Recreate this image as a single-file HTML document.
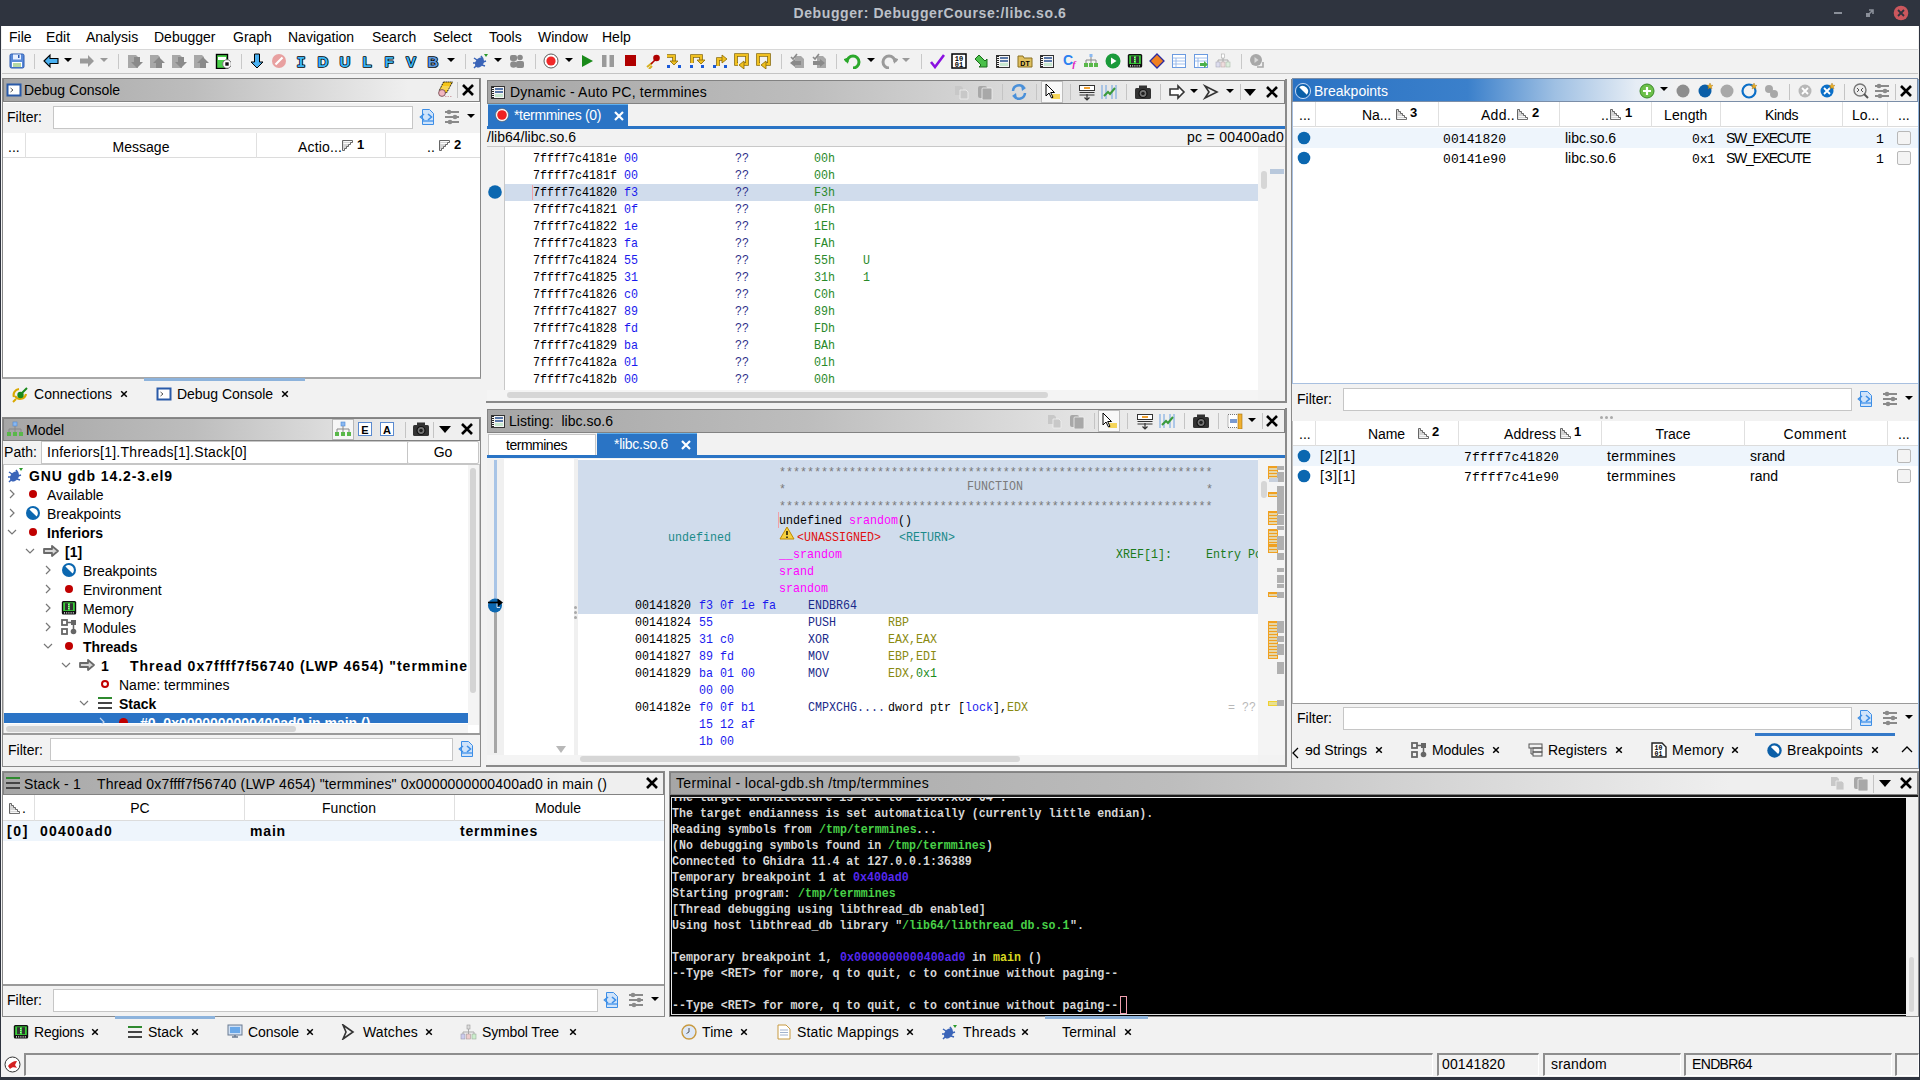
<!DOCTYPE html><html><head><meta charset="utf-8"><style>
html,body{margin:0;padding:0}
body{width:1920px;height:1080px;position:relative;overflow:hidden;background:#f2f2f2;font-family:"Liberation Sans",sans-serif}
div,span,svg{position:absolute;display:block}
span{white-space:pre}
</style></head><body>
<div style="left:0px;top:0px;width:1920px;height:26px;background:#2f343f"></div>
<span style="left:793.50px;top:6.15px;font-size:14px;line-height:14px;color:#bcc0c8;font-family:'Liberation Sans',sans-serif;font-weight:bold;letter-spacing:0.599px;">Debugger: DebuggerCourse:/libc.so.6</span>
<svg style="left:1830px;top:5px;" width="16" height="16" viewBox="0 0 16 16"><rect x="4" y="7" width="8" height="2" fill="#8a8f99"/></svg>
<svg style="left:1862px;top:5px;" width="16" height="16" viewBox="0 0 16 16"><path d="M5 11L11 5M7 5H11V9" stroke="#8a8f99" stroke-width="1.6" fill="none"/><rect x="4" y="8" width="4" height="4" fill="#8a8f99"/></svg>
<svg style="left:1893px;top:5px;" width="16" height="16" viewBox="0 0 16 16"><circle cx="8" cy="8" r="7.3" fill="#cc575d"/><path d="M5 5L11 11M11 5L5 11" stroke="#2f343f" stroke-width="1.8"/></svg>
<div style="left:0px;top:26px;width:1px;height:1054px;background:#2f343f"></div>
<div style="left:1919px;top:26px;width:1px;height:1054px;background:#2f343f"></div>
<div style="left:0px;top:1077px;width:1920px;height:3px;background:#2f343f"></div>
<div style="left:2px;top:26px;width:1916px;height:23px;background:#fff"></div>
<span style="left:9.00px;top:30.15px;font-size:14px;line-height:14px;color:#000;font-family:'Liberation Sans',sans-serif;">File</span>
<span style="left:46.00px;top:30.15px;font-size:14px;line-height:14px;color:#000;font-family:'Liberation Sans',sans-serif;">Edit</span>
<span style="left:86.00px;top:30.15px;font-size:14px;line-height:14px;color:#000;font-family:'Liberation Sans',sans-serif;">Analysis</span>
<span style="left:154.00px;top:30.15px;font-size:14px;line-height:14px;color:#000;font-family:'Liberation Sans',sans-serif;">Debugger</span>
<span style="left:233.00px;top:30.15px;font-size:14px;line-height:14px;color:#000;font-family:'Liberation Sans',sans-serif;">Graph</span>
<span style="left:288.00px;top:30.15px;font-size:14px;line-height:14px;color:#000;font-family:'Liberation Sans',sans-serif;">Navigation</span>
<span style="left:372.00px;top:30.15px;font-size:14px;line-height:14px;color:#000;font-family:'Liberation Sans',sans-serif;">Search</span>
<span style="left:433.00px;top:30.15px;font-size:14px;line-height:14px;color:#000;font-family:'Liberation Sans',sans-serif;">Select</span>
<span style="left:489.00px;top:30.15px;font-size:14px;line-height:14px;color:#000;font-family:'Liberation Sans',sans-serif;">Tools</span>
<span style="left:538.00px;top:30.15px;font-size:14px;line-height:14px;color:#000;font-family:'Liberation Sans',sans-serif;">Window</span>
<span style="left:602.00px;top:30.15px;font-size:14px;line-height:14px;color:#000;font-family:'Liberation Sans',sans-serif;">Help</span>
<div style="left:2px;top:49px;width:1916px;height:25px;background:#f2f2f2;border-top:1px solid #d8d8d8;border-bottom:1px solid #c4c4c4;box-sizing:border-box"></div>
<div style="left:2px;top:78px;width:479px;height:301px;background:#fff;border:1px solid #8a8a8a;border-bottom:2px solid #a8a8a8;box-sizing:border-box"></div>
<div style="left:3px;top:78px;width:477px;height:24px;background:linear-gradient(to right,#a6a6a6 0%,#bdbdbd 40%,#efefef 85%);border:1px solid #828282;box-sizing:border-box"></div>
<svg style="left:6px;top:82px;" width="16" height="16" viewBox="0 0 16 16"><rect x="1.5" y="2.5" width="13" height="11" fill="#fff" stroke="#2a5aa8" stroke-width="2"/><path d="M4.5 6L7 8L4.5 10" stroke="#555" fill="none" stroke-width="1"/></svg>
<span style="left:24.00px;top:83.15px;font-size:14px;line-height:14px;color:#000;font-family:'Liberation Sans',sans-serif;letter-spacing:-0.039px;">Debug Console</span>
<svg style="left:437px;top:81px;" width="18" height="18" viewBox="0 0 18 18"><path d="M6.5 1H15.5L9.5 12L2 10Z" fill="#f5c518" stroke="#111" stroke-width="1" stroke-dasharray="1.3 0.7"/><path d="M5 6H12.5M4 8H11.5" stroke="#fbe89a" stroke-width="0.9"/><circle cx="5" cy="12" r="3.4" fill="#f2b6c0" stroke="#6a4048" stroke-width="0.8"/><path d="M8 15.5H15" stroke="#c89098" stroke-width="0.8" stroke-dasharray="1.5 1"/></svg>
<div style="left:457px;top:82px;width:1px;height:16px;background:#c4c4c4"></div>
<svg style="left:460px;top:81.5px;" width="16" height="16" viewBox="0 0 16 16"><path d="M3.0 3.0L13.0 13.0M13.0 3.0L3.0 13.0" stroke="#000" stroke-width="2.6" stroke-linecap="butt"/></svg>
<div style="left:3px;top:103px;width:477px;height:30px;background:#f2f2f2"></div>
<span style="left:7.00px;top:110.15px;font-size:14px;line-height:14px;color:#000;font-family:'Liberation Sans',sans-serif;">Filter:</span>
<div style="left:53px;top:106px;width:360px;height:23px;background:#fff;border:1px solid #c6c6c6;box-sizing:border-box"></div>
<svg style="left:418px;top:108px;" width="18" height="18" viewBox="0 0 18 18"><path d="M4.5 1.5H11.5L15.5 5.5V16.5H4.5Z" fill="#cfe3fa" stroke="#3d8ee6" stroke-width="1"/><path d="M5 13H15" stroke="#5aa0ee" stroke-width="1.6"/><path d="M6 6L2.5 9L6 12M10 6L13.5 9L10 12" fill="none" stroke="#3d8ee6" stroke-width="1.6"/></svg>
<svg style="left:443px;top:108px;" width="18" height="18" viewBox="0 0 18 18"><g stroke="#8a8a8a" stroke-width="2"><path d="M2 4H16M2 9H16M2 14H16"/></g><g fill="#8a8a8a"><circle cx="6" cy="4" r="2.3"/><circle cx="12" cy="9" r="2.3"/><circle cx="7" cy="14" r="2.3"/></g></svg>
<svg style="left:466px;top:113px;" width="10" height="6" viewBox="0 0 10 6"><path d="M1 1L9 1L5 5Z" fill="#000"/></svg>
<div style="left:3px;top:133px;width:477px;height:25px;background:#fff;border-bottom:1px solid #dcdcdc;box-sizing:border-box"></div>
<div style="left:25px;top:133px;width:1px;height:25px;background:#e0e0e0"></div>
<div style="left:256px;top:133px;width:1px;height:25px;background:#e0e0e0"></div>
<div style="left:385px;top:133px;width:1px;height:25px;background:#e0e0e0"></div>
<span style="left:8.00px;top:140.15px;font-size:14px;line-height:14px;color:#000;font-family:'Liberation Sans',sans-serif;">...</span>
<span style="left:112.50px;top:140.15px;font-size:14px;line-height:14px;color:#000;font-family:'Liberation Sans',sans-serif;letter-spacing:0.027px;">Message</span>
<span style="left:298.00px;top:140.15px;font-size:14px;line-height:14px;color:#000;font-family:'Liberation Sans',sans-serif;letter-spacing:0.151px;">Actio...</span>
<svg style="left:340px;top:138px;" width="15" height="15" viewBox="0 0 15 15"><g transform="translate(1,1)"><path d="M1.5 1.5H11.5V3.5H9.5V5.5H7.5V7.5H5.5V9.5H3.5V11.5H1.5Z" fill="#d4d4d4" stroke="#666" stroke-width="1" stroke-linejoin="round"/><path d="M2.5 2.5H11M2.5 4.5H9M2.5 10.5H3" stroke="#fff" stroke-width="0.9"/></g></svg>
<span style="left:357.00px;top:137.99px;font-size:13px;line-height:13px;color:#000;font-family:'Liberation Sans',sans-serif;font-weight:bold;">1</span>
<span style="left:427.00px;top:140.15px;font-size:14px;line-height:14px;color:#000;font-family:'Liberation Sans',sans-serif;">..</span>
<svg style="left:437px;top:138px;" width="15" height="15" viewBox="0 0 15 15"><g transform="translate(1,1)"><path d="M1.5 1.5H11.5V3.5H9.5V5.5H7.5V7.5H5.5V9.5H3.5V11.5H1.5Z" fill="#d4d4d4" stroke="#666" stroke-width="1" stroke-linejoin="round"/><path d="M2.5 2.5H11M2.5 4.5H9M2.5 10.5H3" stroke="#fff" stroke-width="0.9"/></g></svg>
<span style="left:454.00px;top:137.99px;font-size:13px;line-height:13px;color:#000;font-family:'Liberation Sans',sans-serif;font-weight:bold;">2</span>
<div style="left:2px;top:379px;width:479px;height:37px;background:#f2f2f2"></div>
<div style="left:144px;top:378px;width:161px;height:3px;background:#8db3dc"></div>
<svg style="left:12px;top:386px;" width="17" height="17" viewBox="0 0 17 17"><path d="M3 10A6 6 0 0 0 14 8" stroke="#d9a800" stroke-width="2.2" fill="none"/><path d="M2 11A6 6 0 0 1 7 3" stroke="#d9a800" stroke-width="2.2" fill="none"/><circle cx="8.5" cy="9" r="3.2" fill="#1a8a1a"/><path d="M9 8L15 2" stroke="#1a8a1a" stroke-width="2"/><path d="M1 16L4 13" stroke="#d9a800" stroke-width="2"/></svg>
<span style="left:34.00px;top:387.15px;font-size:14px;line-height:14px;color:#000;font-family:'Liberation Sans',sans-serif;letter-spacing:0.016px;">Connections</span>
<svg style="left:119px;top:389px;" width="10" height="10" viewBox="0 0 10 10"><path d="M2.2 2.2L7.8 7.8M7.8 2.2L2.2 7.8" stroke="#000" stroke-width="1.5"/></svg>
<svg style="left:156px;top:386px;" width="16" height="16" viewBox="0 0 16 16"><rect x="1.5" y="2.5" width="13" height="11" fill="#fff" stroke="#2a5aa8" stroke-width="2"/><path d="M4.5 6L7 8L4.5 10" stroke="#555" fill="none" stroke-width="1"/></svg>
<span style="left:177.00px;top:387.15px;font-size:14px;line-height:14px;color:#000;font-family:'Liberation Sans',sans-serif;letter-spacing:-0.039px;">Debug Console</span>
<svg style="left:280px;top:389px;" width="10" height="10" viewBox="0 0 10 10"><path d="M2.2 2.2L7.8 7.8M7.8 2.2L2.2 7.8" stroke="#000" stroke-width="1.5"/></svg>
<div style="left:2px;top:417px;width:479px;height:350px;background:#f2f2f2;border:1px solid #8a8a8a;box-sizing:border-box"></div>
<div style="left:3px;top:418px;width:477px;height:23px;background:linear-gradient(to right,#a6a6a6 0%,#bdbdbd 40%,#efefef 85%);border:1px solid #828282;box-sizing:border-box"></div>
<svg style="left:6px;top:421px;" width="18" height="17" viewBox="0 0 18 17"><rect x="7" y="1" width="4" height="4" fill="#8ab8f0" stroke="#4a88d8" stroke-width="0.6"/><path d="M9 5V8M3 8H15M3 8V11M9 8V11M15 8V11" stroke="#888" stroke-width="1"/><rect x="1" y="11" width="4" height="4" fill="#5ab84a"/><rect x="7" y="11" width="4" height="4" fill="#5ab84a"/><rect x="13" y="11" width="4" height="4" fill="#5ab84a"/></svg>
<span style="left:26.00px;top:423.15px;font-size:14px;line-height:14px;color:#000;font-family:'Liberation Sans',sans-serif;letter-spacing:-0.027px;">Model</span>
<div style="left:332px;top:419px;width:22px;height:21px;background:#f6f6f6;border:1px solid #b8b8b8;box-sizing:border-box"></div>
<svg style="left:334px;top:421px;" width="18" height="17" viewBox="0 0 18 17"><rect x="7" y="1" width="4" height="4" fill="#8ab8f0" stroke="#4a88d8" stroke-width="0.6"/><path d="M9 5V8M3 8H15M3 8V11M9 8V11M15 8V11" stroke="#888" stroke-width="1"/><rect x="1" y="11" width="4" height="4" fill="#5ab84a"/><rect x="7" y="11" width="4" height="4" fill="#5ab84a"/><rect x="13" y="11" width="4" height="4" fill="#5ab84a"/></svg>
<svg style="left:357px;top:421px;" width="16" height="16" viewBox="0 0 16 16"><rect x="1.5" y="1.5" width="13" height="13" fill="#fff" stroke="#5a8ad0"/><text x="8" y="12.5" font-size="11" font-weight="bold" text-anchor="middle" font-family="Liberation Sans" fill="#000">E</text></svg>
<svg style="left:379px;top:421px;" width="16" height="16" viewBox="0 0 16 16"><rect x="1.5" y="1.5" width="13" height="13" fill="#fff" stroke="#5a8ad0"/><text x="8" y="12.5" font-size="11" font-weight="bold" text-anchor="middle" font-family="Liberation Sans" fill="#000">A</text></svg>
<div style="left:405px;top:422px;width:1px;height:16px;background:#c4c4c4"></div>
<svg style="left:412px;top:420px;" width="18" height="18" viewBox="0 0 18 18"><rect x="1" y="5" width="16" height="11" rx="1.5" fill="#333"/><rect x="5" y="2.5" width="8" height="3.5" fill="#333"/><circle cx="9" cy="10.5" r="4" fill="#777" stroke="#111" stroke-width="1.2"/><circle cx="9" cy="10.5" r="1.8" fill="#222"/></svg>
<div style="left:433px;top:422px;width:1px;height:16px;background:#c4c4c4"></div>
<svg style="left:438px;top:424px;" width="14" height="10" viewBox="0 0 14 10"><path d="M1 2L13 2L7 9Z" fill="#000"/></svg>
<svg style="left:459px;top:421px;" width="16" height="16" viewBox="0 0 16 16"><path d="M3.0 3.0L13.0 13.0M13.0 3.0L3.0 13.0" stroke="#000" stroke-width="2.6" stroke-linecap="butt"/></svg>
<span style="left:4.00px;top:445.15px;font-size:14px;line-height:14px;color:#000;font-family:'Liberation Sans',sans-serif;letter-spacing:0.062px;">Path:</span>
<div style="left:41px;top:441px;width:367px;height:23px;background:#fff;border:1px solid #c6c6c6;box-sizing:border-box"></div>
<span style="left:47.00px;top:445.15px;font-size:14px;line-height:14px;color:#000;font-family:'Liberation Sans',sans-serif;letter-spacing:0.268px;">Inferiors[1].Threads[1].Stack[0]</span>
<div style="left:407px;top:441px;width:72px;height:23px;background:#fff;border:1px solid #c6c6c6;border-radius:2px;box-sizing:border-box"></div>
<span style="left:433.66px;top:445.15px;font-size:14px;line-height:14px;color:#000;font-family:'Liberation Sans',sans-serif;">Go</span>
<div style="left:3px;top:464px;width:477px;height:270px;background:#fff;border:1px solid #c6c6c6;box-sizing:border-box"></div>
<svg style="left:7px;top:467px;" width="17" height="17" viewBox="0 0 17 17"><ellipse cx="7.5" cy="9.5" rx="4" ry="5.5" fill="#3a64b8" transform="rotate(35 7.5 9.5)"/><path d="M2 5L5 7M1 10H4M2 15L5 12M9 3L11 6M14 8L11 9M13 13L10 12" stroke="#3a64b8" stroke-width="1.5"/><path d="M12 1L16 1L14 4Z" fill="#2a9a2a"/></svg>
<span style="left:29.00px;top:469.15px;font-size:14px;line-height:14px;color:#000;font-family:'Liberation Sans',sans-serif;font-weight:bold;letter-spacing:0.911px;">GNU gdb 14.2-3.el9</span>
<svg style="left:7px;top:488px;" width="10" height="12" viewBox="0 0 10 12"><path d="M3 2L7 6L3 10" fill="none" stroke="#777" stroke-width="1.2"/></svg>
<svg style="left:27px;top:488px;" width="12" height="12" viewBox="0 0 12 12"><circle cx="6" cy="6" r="4" fill="#c00000"/></svg>
<span style="left:47.00px;top:488.15px;font-size:14px;line-height:14px;color:#000;font-family:'Liberation Sans',sans-serif;">Available</span>
<svg style="left:7px;top:507px;" width="10" height="12" viewBox="0 0 10 12"><path d="M3 2L7 6L3 10" fill="none" stroke="#777" stroke-width="1.2"/></svg>
<svg style="left:25px;top:505px;" width="16" height="16" viewBox="0 0 16 16"><circle cx="8" cy="8" r="7" fill="#0b67b0"/><path d="M4.4 4.4A5.1 5.1 0 0 1 11.6 11.6Z" fill="#fff"/></svg>
<span style="left:47.00px;top:507.15px;font-size:14px;line-height:14px;color:#000;font-family:'Liberation Sans',sans-serif;">Breakpoints</span>
<svg style="left:6px;top:527px;" width="12" height="10" viewBox="0 0 12 10"><path d="M2 3L6 7L10 3" fill="none" stroke="#777" stroke-width="1.2"/></svg>
<svg style="left:27px;top:526px;" width="12" height="12" viewBox="0 0 12 12"><circle cx="6" cy="6" r="4" fill="#c00000"/></svg>
<span style="left:47.00px;top:526.15px;font-size:14px;line-height:14px;color:#000;font-family:'Liberation Sans',sans-serif;font-weight:bold;">Inferiors</span>
<svg style="left:24px;top:546px;" width="12" height="10" viewBox="0 0 12 10"><path d="M2 3L6 7L10 3" fill="none" stroke="#777" stroke-width="1.2"/></svg>
<svg style="left:42px;top:544px;" width="18" height="14" viewBox="0 0 18 14"><path d="M2 5H10V2L16 7L10 12V9H2Z" fill="#d8d8d8" stroke="#6a6a6a" stroke-width="1.8" stroke-linejoin="round"/></svg>
<span style="left:65.00px;top:545.15px;font-size:14px;line-height:14px;color:#000;font-family:'Liberation Sans',sans-serif;font-weight:bold;">[1]</span>
<svg style="left:43px;top:564px;" width="10" height="12" viewBox="0 0 10 12"><path d="M3 2L7 6L3 10" fill="none" stroke="#777" stroke-width="1.2"/></svg>
<svg style="left:61px;top:562px;" width="16" height="16" viewBox="0 0 16 16"><circle cx="8" cy="8" r="7" fill="#0b67b0"/><path d="M4.4 4.4A5.1 5.1 0 0 1 11.6 11.6Z" fill="#fff"/></svg>
<span style="left:83.00px;top:564.15px;font-size:14px;line-height:14px;color:#000;font-family:'Liberation Sans',sans-serif;">Breakpoints</span>
<svg style="left:43px;top:583px;" width="10" height="12" viewBox="0 0 10 12"><path d="M3 2L7 6L3 10" fill="none" stroke="#777" stroke-width="1.2"/></svg>
<svg style="left:63px;top:583px;" width="12" height="12" viewBox="0 0 12 12"><circle cx="6" cy="6" r="4" fill="#c00000"/></svg>
<span style="left:83.00px;top:583.15px;font-size:14px;line-height:14px;color:#000;font-family:'Liberation Sans',sans-serif;">Environment</span>
<svg style="left:43px;top:602px;" width="10" height="12" viewBox="0 0 10 12"><path d="M3 2L7 6L3 10" fill="none" stroke="#777" stroke-width="1.2"/></svg>
<svg style="left:61px;top:600px;" width="16" height="16" viewBox="0 0 16 16"><rect x="0.8" y="1" width="14.4" height="13.5" rx="1.5" fill="#111"/><rect x="2.2" y="2.4" width="11.6" height="8.6" fill="#3ad03a"/><rect x="4" y="3.2" width="3" height="7" fill="#333"/><rect x="9" y="3.2" width="3" height="7" fill="#333"/><path d="M7.8 4V10" stroke="#fff" stroke-width="0.8" stroke-dasharray="1 1"/><path d="M3 12.8H13" stroke="#fff" stroke-width="1.2" stroke-dasharray="1 1.2"/></svg>
<span style="left:83.00px;top:602.15px;font-size:14px;line-height:14px;color:#000;font-family:'Liberation Sans',sans-serif;">Memory</span>
<svg style="left:43px;top:621px;" width="10" height="12" viewBox="0 0 10 12"><path d="M3 2L7 6L3 10" fill="none" stroke="#777" stroke-width="1.2"/></svg>
<svg style="left:61px;top:619px;" width="16" height="16" viewBox="0 0 16 16"><rect x="1" y="1" width="5" height="5" fill="none" stroke="#666" stroke-width="1.8"/><rect x="10" y="1" width="5" height="5" fill="#666"/><rect x="1" y="10" width="5" height="5" fill="none" stroke="#666" stroke-width="1.8"/><circle cx="12.5" cy="12.5" r="2.8" fill="#666"/><path d="M6 3.5H10M12.5 6V10" stroke="#666" stroke-width="1.5"/></svg>
<span style="left:83.00px;top:621.15px;font-size:14px;line-height:14px;color:#000;font-family:'Liberation Sans',sans-serif;">Modules</span>
<svg style="left:42px;top:641px;" width="12" height="10" viewBox="0 0 12 10"><path d="M2 3L6 7L10 3" fill="none" stroke="#777" stroke-width="1.2"/></svg>
<svg style="left:63px;top:640px;" width="12" height="12" viewBox="0 0 12 12"><circle cx="6" cy="6" r="4" fill="#c00000"/></svg>
<span style="left:83.00px;top:640.15px;font-size:14px;line-height:14px;color:#000;font-family:'Liberation Sans',sans-serif;font-weight:bold;">Threads</span>
<svg style="left:60px;top:660px;" width="12" height="10" viewBox="0 0 12 10"><path d="M2 3L6 7L10 3" fill="none" stroke="#777" stroke-width="1.2"/></svg>
<svg style="left:78px;top:658px;" width="18" height="14" viewBox="0 0 18 14"><path d="M2 5H10V2L16 7L10 12V9H2Z" fill="#d8d8d8" stroke="#6a6a6a" stroke-width="1.8" stroke-linejoin="round"/></svg>
<span style="left:101.00px;top:659.15px;font-size:14px;line-height:14px;color:#000;font-family:'Liberation Sans',sans-serif;font-weight:bold;">1</span>
<svg style="left:100px;top:679px;" width="10" height="10" viewBox="0 0 10 10"><circle cx="5" cy="5" r="3" fill="none" stroke="#c00000" stroke-width="2"/></svg>
<span style="left:119.00px;top:678.15px;font-size:14px;line-height:14px;color:#000;font-family:'Liberation Sans',sans-serif;">Name: termmines</span>
<svg style="left:78px;top:698px;" width="12" height="10" viewBox="0 0 12 10"><path d="M2 3L6 7L10 3" fill="none" stroke="#777" stroke-width="1.2"/></svg>
<svg style="left:97px;top:695px;" width="16" height="16" viewBox="0 0 16 16"><path d="M1 3H15M1 8H15M1 13H15" stroke="#2f8a2f" stroke-width="2"/><path d="M1 8H15M1 13H15" stroke="#444" stroke-width="2"/></svg>
<span style="left:119.00px;top:697.15px;font-size:14px;line-height:14px;color:#000;font-family:'Liberation Sans',sans-serif;font-weight:bold;">Stack</span>
<span style="left:130.00px;top:659.15px;font-size:14px;line-height:14px;color:#000;font-family:'Liberation Sans',sans-serif;font-weight:bold;letter-spacing:1.004px;">Thread 0x7ffff7f56740 (LWP 4654) &quot;termmine</span>
<div style="left:4px;top:713px;width:464px;height:10px;background:#2b74c6;overflow:hidden"></div>
<div style="left:4px;top:713px;width:464px;height:10px;overflow:hidden"><span style="left:136px;top:3px;font-size:14px;line-height:14px;color:#fff;font-weight:bold;font-family:'Liberation Sans'">#0  0x0000000000400ad0 in main ()</span></div>
<div style="left:4px;top:713px;width:464px;height:10px;overflow:hidden"><div style="left:115px;top:5px;width:9px;height:9px;background:#c00000;border-radius:50%"></div></div>
<svg style="left:97px;top:716px;" width="10" height="12" viewBox="0 0 10 12"><path d="M3 2L7 6L3 10" fill="none" stroke="#c8d8f0" stroke-width="1.2"/></svg>
<div style="left:468px;top:465px;width:11px;height:260px;background:#f4f4f4"></div>
<div style="left:470px;top:468px;width:6px;height:225px;background:#d4d4d4;border-radius:3px"></div>
<div style="left:4px;top:724px;width:464px;height:9px;background:#f4f4f4"></div>
<div style="left:6px;top:726px;width:290px;height:6px;background:#d4d4d4;border-radius:3px"></div>
<div style="left:3px;top:733px;width:477px;height:2px;background:#9a9a9a"></div>
<span style="left:8.00px;top:743.15px;font-size:14px;line-height:14px;color:#000;font-family:'Liberation Sans',sans-serif;">Filter:</span>
<div style="left:50px;top:738px;width:403px;height:23px;background:#fff;border:1px solid #c6c6c6;box-sizing:border-box"></div>
<svg style="left:457px;top:740px;" width="18" height="18" viewBox="0 0 18 18"><path d="M4.5 1.5H11.5L15.5 5.5V16.5H4.5Z" fill="#cfe3fa" stroke="#3d8ee6" stroke-width="1"/><path d="M5 13H15" stroke="#5aa0ee" stroke-width="1.6"/><path d="M6 6L2.5 9L6 12M10 6L13.5 9L10 12" fill="none" stroke="#3d8ee6" stroke-width="1.6"/></svg>
<div style="left:2px;top:771px;width:663px;height:246px;background:#f2f2f2;border:1px solid #8a8a8a;box-sizing:border-box"></div>
<div style="left:3px;top:772px;width:661px;height:23px;background:linear-gradient(to right,#a6a6a6 0%,#bdbdbd 40%,#efefef 85%);border:1px solid #828282;box-sizing:border-box"></div>
<svg style="left:5px;top:775px;" width="16" height="16" viewBox="0 0 16 16"><path d="M1 3H15M1 8H15M1 13H15" stroke="#2f8a2f" stroke-width="2"/><path d="M1 8H15M1 13H15" stroke="#444" stroke-width="2"/></svg>
<span style="left:24.00px;top:777.15px;font-size:14px;line-height:14px;color:#000;font-family:'Liberation Sans',sans-serif;letter-spacing:0.195px;">Stack - 1</span>
<span style="left:97.00px;top:777.15px;font-size:14px;line-height:14px;color:#000;font-family:'Liberation Sans',sans-serif;letter-spacing:0.159px;">Thread 0x7ffff7f56740 (LWP 4654) &quot;termmines&quot; 0x0000000000400ad0 in main ()</span>
<svg style="left:644px;top:775px;" width="16" height="16" viewBox="0 0 16 16"><path d="M3.0 3.0L13.0 13.0M13.0 3.0L3.0 13.0" stroke="#000" stroke-width="2.6" stroke-linecap="butt"/></svg>
<div style="left:3px;top:795px;width:661px;height:190px;background:#fff"></div>
<div style="left:3px;top:795px;width:661px;height:26px;background:#fff;border-bottom:1px solid #dcdcdc;box-sizing:border-box"></div>
<div style="left:34px;top:795px;width:1px;height:26px;background:#e0e0e0"></div>
<div style="left:244px;top:795px;width:1px;height:26px;background:#e0e0e0"></div>
<div style="left:454px;top:795px;width:1px;height:26px;background:#e0e0e0"></div>
<svg style="left:7px;top:800px;" width="15" height="15" viewBox="0 0 15 15"><g transform="translate(1,2)"><path d="M1.5 1.5H3.5V3.5H5.5V5.5H7.5V7.5H9.5V9.5H11.5V11.5H1.5Z" fill="#d4d4d4" stroke="#666" stroke-width="1" stroke-linejoin="round"/><path d="M2.5 2.8H3M2.5 8.6H9M2.5 10.6H11" stroke="#fff" stroke-width="0.9"/></g></svg>
<span style="left:22.00px;top:801.15px;font-size:14px;line-height:14px;color:#000;font-family:'Liberation Sans',sans-serif;">.</span>
<span style="left:130.28px;top:801.15px;font-size:14px;line-height:14px;color:#000;font-family:'Liberation Sans',sans-serif;">PC</span>
<span style="left:322.00px;top:801.15px;font-size:14px;line-height:14px;color:#000;font-family:'Liberation Sans',sans-serif;letter-spacing:0.038px;">Function</span>
<span style="left:535.00px;top:801.15px;font-size:14px;line-height:14px;color:#000;font-family:'Liberation Sans',sans-serif;letter-spacing:0.014px;">Module</span>
<div style="left:3px;top:821px;width:661px;height:20px;background:#eef5fc"></div>
<span style="left:7.00px;top:824.15px;font-size:14px;line-height:14px;color:#000;font-family:'Liberation Sans',sans-serif;font-weight:bold;letter-spacing:1.629px;">[0]</span>
<span style="left:40.00px;top:824.15px;font-size:14px;line-height:14px;color:#000;font-family:'Liberation Sans',sans-serif;font-weight:bold;letter-spacing:1.243px;">00400ad0</span>
<span style="left:250.00px;top:824.15px;font-size:14px;line-height:14px;color:#000;font-family:'Liberation Sans',sans-serif;font-weight:bold;letter-spacing:0.831px;">main</span>
<span style="left:460.00px;top:824.15px;font-size:14px;line-height:14px;color:#000;font-family:'Liberation Sans',sans-serif;font-weight:bold;letter-spacing:0.799px;">termmines</span>
<div style="left:3px;top:984px;width:661px;height:2px;background:#9a9a9a"></div>
<span style="left:7.00px;top:993.15px;font-size:14px;line-height:14px;color:#000;font-family:'Liberation Sans',sans-serif;">Filter:</span>
<div style="left:53px;top:989px;width:545px;height:23px;background:#fff;border:1px solid #c6c6c6;box-sizing:border-box"></div>
<svg style="left:602px;top:991px;" width="18" height="18" viewBox="0 0 18 18"><path d="M4.5 1.5H11.5L15.5 5.5V16.5H4.5Z" fill="#cfe3fa" stroke="#3d8ee6" stroke-width="1"/><path d="M5 13H15" stroke="#5aa0ee" stroke-width="1.6"/><path d="M6 6L2.5 9L6 12M10 6L13.5 9L10 12" fill="none" stroke="#3d8ee6" stroke-width="1.6"/></svg>
<svg style="left:627px;top:991px;" width="18" height="18" viewBox="0 0 18 18"><g stroke="#8a8a8a" stroke-width="2"><path d="M2 4H16M2 9H16M2 14H16"/></g><g fill="#8a8a8a"><circle cx="6" cy="4" r="2.3"/><circle cx="12" cy="9" r="2.3"/><circle cx="7" cy="14" r="2.3"/></g></svg>
<svg style="left:650px;top:996px;" width="10" height="6" viewBox="0 0 10 6"><path d="M1 1L9 1L5 5Z" fill="#000"/></svg>
<div style="left:115px;top:1016px;width:100px;height:3px;background:#8db3dc"></div>
<svg style="left:13px;top:1024px;" width="16" height="16" viewBox="0 0 16 16"><rect x="0.8" y="1" width="14.4" height="13.5" rx="1.5" fill="#111"/><rect x="2.2" y="2.4" width="11.6" height="8.6" fill="#3ad03a"/><rect x="4" y="3.2" width="3" height="7" fill="#333"/><rect x="9" y="3.2" width="3" height="7" fill="#333"/><path d="M7.8 4V10" stroke="#fff" stroke-width="0.8" stroke-dasharray="1 1"/><path d="M3 12.8H13" stroke="#fff" stroke-width="1.2" stroke-dasharray="1 1.2"/></svg>
<span style="left:34.00px;top:1025.15px;font-size:14px;line-height:14px;color:#000;font-family:'Liberation Sans',sans-serif;letter-spacing:-0.195px;">Regions</span>
<svg style="left:90px;top:1027px;" width="10" height="10" viewBox="0 0 10 10"><path d="M2.2 2.2L7.8 7.8M7.8 2.2L2.2 7.8" stroke="#000" stroke-width="1.5"/></svg>
<svg style="left:127px;top:1024px;" width="16" height="16" viewBox="0 0 16 16"><path d="M1 3H15M1 8H15M1 13H15" stroke="#2f8a2f" stroke-width="2"/><path d="M1 8H15M1 13H15" stroke="#444" stroke-width="2"/></svg>
<span style="left:148.00px;top:1025.15px;font-size:14px;line-height:14px;color:#000;font-family:'Liberation Sans',sans-serif;letter-spacing:-0.003px;">Stack</span>
<svg style="left:190px;top:1027px;" width="10" height="10" viewBox="0 0 10 10"><path d="M2.2 2.2L7.8 7.8M7.8 2.2L2.2 7.8" stroke="#000" stroke-width="1.5"/></svg>
<svg style="left:227px;top:1024px;" width="16" height="16" viewBox="0 0 16 16"><rect x="1" y="1" width="14" height="10" fill="#cfe0f5" stroke="#6a7a90"/><rect x="3" y="3" width="10" height="6" fill="#6aa8e8"/><path d="M5 13H11M8 11V13" stroke="#6a7a90" stroke-width="1.5"/></svg>
<span style="left:248.00px;top:1025.15px;font-size:14px;line-height:14px;color:#000;font-family:'Liberation Sans',sans-serif;letter-spacing:-0.052px;">Console</span>
<svg style="left:305px;top:1027px;" width="10" height="10" viewBox="0 0 10 10"><path d="M2.2 2.2L7.8 7.8M7.8 2.2L2.2 7.8" stroke="#000" stroke-width="1.5"/></svg>
<svg style="left:340px;top:1024px;" width="16" height="16" viewBox="0 0 16 16"><path d="M3 1L13 8L3 15L6 8Z" fill="none" stroke="#333" stroke-width="1.6"/></svg>
<span style="left:363.00px;top:1025.15px;font-size:14px;line-height:14px;color:#000;font-family:'Liberation Sans',sans-serif;letter-spacing:0.151px;">Watches</span>
<svg style="left:424px;top:1027px;" width="10" height="10" viewBox="0 0 10 10"><path d="M2.2 2.2L7.8 7.8M7.8 2.2L2.2 7.8" stroke="#000" stroke-width="1.5"/></svg>
<svg style="left:460px;top:1024px;" width="17" height="16" viewBox="0 0 17 16"><rect x="7" y="1" width="3" height="4" fill="#ddd" stroke="#999" stroke-width="0.6"/><path d="M8.5 5V8M3 8H14M3 8V10M8.5 8V10M14 8V10" stroke="#aaa" stroke-width="1"/><rect x="1" y="10" width="4" height="5" fill="#cce" stroke="#99a" stroke-width="0.6"/><rect x="6.5" y="10" width="4" height="5" fill="#ecc" stroke="#a99" stroke-width="0.6"/><rect x="12" y="10" width="4" height="5" fill="#cec" stroke="#9a9" stroke-width="0.6"/></svg>
<span style="left:482.00px;top:1025.15px;font-size:14px;line-height:14px;color:#000;font-family:'Liberation Sans',sans-serif;letter-spacing:-0.144px;">Symbol Tree</span>
<svg style="left:568px;top:1027px;" width="10" height="10" viewBox="0 0 10 10"><path d="M2.2 2.2L7.8 7.8M7.8 2.2L2.2 7.8" stroke="#000" stroke-width="1.5"/></svg>
<svg style="left:4px;top:1056px;" width="17" height="17" viewBox="0 0 17 17"><circle cx="8.5" cy="8.5" r="7.5" fill="#fff" stroke="#333" stroke-width="1"/><path d="M4 10C6 7 9 5 13 5L11 9L13 12C10 11 8 11 6 13Z" fill="#d42020"/></svg>
<div style="left:24px;top:1053px;width:1409px;height:23px;border-top:2px solid #8e8e8e;border-left:2px solid #8e8e8e;border-bottom:1px solid #fff;border-right:1px solid #fff;box-sizing:border-box"></div>
<div style="left:1437px;top:1053px;width:102px;height:23px;border-top:2px solid #8e8e8e;border-left:2px solid #8e8e8e;border-bottom:1px solid #fff;border-right:1px solid #fff;box-sizing:border-box"></div>
<span style="left:1442.00px;top:1057.15px;font-size:14px;line-height:14px;color:#000;font-family:'Liberation Sans',sans-serif;letter-spacing:0.089px;">00141820</span>
<div style="left:1543px;top:1053px;width:138px;height:23px;border-top:2px solid #8e8e8e;border-left:2px solid #8e8e8e;border-bottom:1px solid #fff;border-right:1px solid #fff;box-sizing:border-box"></div>
<span style="left:1551.00px;top:1057.15px;font-size:14px;line-height:14px;color:#000;font-family:'Liberation Sans',sans-serif;letter-spacing:0.218px;">srandom</span>
<div style="left:1684px;top:1053px;width:208px;height:23px;border-top:2px solid #8e8e8e;border-left:2px solid #8e8e8e;border-bottom:1px solid #fff;border-right:1px solid #fff;box-sizing:border-box"></div>
<span style="left:1692.00px;top:1057.15px;font-size:14px;line-height:14px;color:#000;font-family:'Liberation Sans',sans-serif;letter-spacing:-0.655px;">ENDBR64</span>
<div style="left:1895px;top:1053px;width:24px;height:23px;border-top:2px solid #8e8e8e;border-left:2px solid #8e8e8e;border-bottom:1px solid #fff;border-right:1px solid #fff;box-sizing:border-box"></div>
<div style="left:486px;top:79px;width:801px;height:324px;background:#f2f2f2;border-bottom:2px solid #8a8a8a;box-sizing:border-box"></div>
<div style="left:487px;top:80px;width:798px;height:24px;background:linear-gradient(to right,#a6a6a6 0%,#bdbdbd 40%,#efefef 85%);border:1px solid #828282;box-sizing:border-box"></div>
<svg style="left:491px;top:86px;" width="14" height="13" viewBox="0 0 14 13"><rect x="0.5" y="0.5" width="13" height="12" fill="#f4f4f4" stroke="#333" stroke-width="1"/><path d="M2 1V12" stroke="#222" stroke-dasharray="1 1" stroke-width="2"/><rect x="4" y="2" width="8" height="2" fill="#5a78a8"/><rect x="4" y="5" width="8" height="2" fill="#5a78a8"/><rect x="4" y="8" width="8" height="3" fill="#c8e8d0"/></svg>
<span style="left:510.00px;top:85.15px;font-size:14px;line-height:14px;color:#000;font-family:'Liberation Sans',sans-serif;letter-spacing:0.200px;">Dynamic - Auto PC, termmines</span>
<svg style="left:954px;top:84px;" width="16" height="16" viewBox="0 0 16 16"><path d="M1 2H7L9 4V11H1Z" fill="#c8c8c8"/><path d="M6 6H12L14 8V15H6Z" fill="#c8c8c8" stroke="#f0f0f0" stroke-width="0.8"/></svg>
<svg style="left:977px;top:84px;" width="16" height="16" viewBox="0 0 16 16"><rect x="1" y="2" width="9" height="12" rx="2" fill="#a8a8a8"/><rect x="5" y="4" width="10" height="12" rx="1" fill="#a8a8a8" stroke="#f0f0f0" stroke-width="0.8"/></svg>
<div style="left:1002px;top:84px;width:1px;height:16px;background:#c4c4c4"></div>
<svg style="left:1010px;top:83px;" width="18" height="18" viewBox="0 0 18 18"><path d="M3 8A6 6 0 0 1 14 5" fill="none" stroke="#4a90d9" stroke-width="2.5"/><path d="M15 10A6 6 0 0 1 4 13" fill="none" stroke="#4a90d9" stroke-width="2.5"/><path d="M11 2L16 5L12 8Z" fill="#4a90d9"/><path d="M7 16L2 13L6 10Z" fill="#4a90d9"/></svg>
<div style="left:1036px;top:84px;width:1px;height:16px;background:#c4c4c4"></div>
<svg style="left:1041px;top:81px;" width="22" height="22" viewBox="0 0 22 22"><rect x="0.5" y="0.5" width="21" height="21" fill="#f8f8f8" stroke="#bdbdbd"/><rect x="11" y="13" width="8" height="5" fill="#f5d55a"/><path d="M5 3V15L8 12L10.5 17L12 16.3L9.7 11.5H13.5Z" fill="#fff" stroke="#000" stroke-width="1"/></svg>
<div style="left:1070px;top:84px;width:1px;height:16px;background:#c4c4c4"></div>
<svg style="left:1078px;top:83px;" width="18" height="18" viewBox="0 0 18 18"><rect x="1.5" y="2.5" width="15" height="5" fill="#fff" stroke="#333"/><rect x="6" y="4" width="6" height="2" fill="#f0a030"/><path d="M1.5 9.5H16.5M1.5 12H16.5" stroke="#333"/><path d="M9 11V17M6.5 14.5L9 17L11.5 14.5" stroke="#333" fill="none" stroke-width="1.2"/></svg>
<svg style="left:1100px;top:83px;" width="18" height="18" viewBox="0 0 18 18"><path d="M2 2V16M6 2V16M12 2V16M16 2V16" stroke="#6aa0e0" stroke-width="1"/><path d="M4 13L8 9L10 11L15 5" fill="none" stroke="#3a9a3a" stroke-width="2"/></svg>
<div style="left:1126px;top:84px;width:1px;height:16px;background:#c4c4c4"></div>
<svg style="left:1134px;top:83px;" width="18" height="18" viewBox="0 0 18 18"><rect x="1" y="5" width="16" height="11" rx="1.5" fill="#333"/><rect x="5" y="2.5" width="8" height="3.5" fill="#333"/><circle cx="9" cy="10.5" r="4" fill="#777" stroke="#111" stroke-width="1.2"/><circle cx="9" cy="10.5" r="1.8" fill="#222"/></svg>
<div style="left:1160px;top:84px;width:1px;height:16px;background:#c4c4c4"></div>
<svg style="left:1168px;top:84px;" width="18" height="16" viewBox="0 0 18 16"><path d="M2 5H10V2L16 8L10 14V11H2Z" fill="#fff" stroke="#333" stroke-width="1.6"/></svg>
<svg style="left:1189px;top:88px;" width="10" height="6" viewBox="0 0 10 6"><path d="M1 1L9 1L5 5Z" fill="#000"/></svg>
<svg style="left:1202px;top:84px;" width="18" height="16" viewBox="0 0 18 16"><path d="M3 2L15 8L3 14L7 8Z" fill="none" stroke="#333" stroke-width="1.6"/></svg>
<svg style="left:1225px;top:88px;" width="10" height="6" viewBox="0 0 10 6"><path d="M1 1L9 1L5 5Z" fill="#000"/></svg>
<div style="left:1240px;top:84px;width:1px;height:16px;background:#c4c4c4"></div>
<svg style="left:1243px;top:87px;" width="14" height="10" viewBox="0 0 14 10"><path d="M1 2L13 2L7 9Z" fill="#000"/></svg>
<svg style="left:1264px;top:84px;" width="16" height="16" viewBox="0 0 16 16"><path d="M3.0 3.0L13.0 13.0M13.0 3.0L3.0 13.0" stroke="#000" stroke-width="2.6" stroke-linecap="butt"/></svg>
<div style="left:1285px;top:79px;width:2px;height:324px;background:#8a8a8a"></div>
<div style="left:487px;top:104px;width:798px;height:25px;background:#f2f2f2"></div>
<div style="left:488px;top:104px;width:140px;height:22px;background:#2a74c5;border-top:1px solid #5fb0f0;box-sizing:border-box"></div>
<svg style="left:494px;top:107px;" width="16" height="16" viewBox="0 0 16 16"><circle cx="8" cy="8" r="6.5" fill="#fff" stroke="#555" stroke-width="0.6"/><circle cx="8" cy="8" r="4.8" fill="#f02020"/></svg>
<span style="left:514.00px;top:108.15px;font-size:14px;line-height:14px;color:#fff;font-family:'Liberation Sans',sans-serif;letter-spacing:-0.343px;">*termmines (0)</span>
<svg style="left:611px;top:108px;" width="16" height="16" viewBox="0 0 16 16"><path d="M4.0 4.0L12.0 12.0M12.0 4.0L4.0 12.0" stroke="#fff" stroke-width="2.2" stroke-linecap="butt"/></svg>
<div style="left:487px;top:126px;width:798px;height:3px;background:#2a74c5"></div>
<span style="left:487.00px;top:130.15px;font-size:14px;line-height:14px;color:#000;font-family:'Liberation Sans',sans-serif;letter-spacing:0.018px;">/lib64/libc.so.6</span>
<span style="left:1187.00px;top:130.15px;font-size:14px;line-height:14px;color:#000;font-family:'Liberation Sans',sans-serif;letter-spacing:0.305px;">pc = 00400ad0</span>
<div style="left:487px;top:146px;width:798px;height:1px;background:#c8c8c8"></div>
<div style="left:504px;top:147px;width:754px;height:243px;background:#fff;border-left:1px solid #c8c8c8;box-sizing:border-box"></div>
<div style="left:1258px;top:147px;width:27px;height:243px;background:#f4f4f4"></div>
<div style="left:1261px;top:171px;width:6px;height:18px;background:#d6d6d6;border-radius:3px"></div>
<div style="left:1270px;top:169px;width:14px;height:5px;background:#b8c8dc"></div>
<div style="left:505px;top:184px;width:753px;height:17px;background:#d0dcec"></div>
<div style="left:532px;top:185px;width:1px;height:15px;background:#f0a0a8"></div>
<svg style="left:487px;top:184px;" width="16" height="16" viewBox="0 0 16 16"><circle cx="8" cy="8" r="6.8" fill="#0b67b0"/></svg>
<span style="left:533.00px;top:153.45px;font-size:12.2px;line-height:12.2px;color:#000;font-family:'Liberation Mono',monospace;transform:scaleX(0.9562);transform-origin:0 0;">7ffff7c4181e</span>
<span style="left:624.00px;top:153.45px;font-size:12.2px;line-height:12.2px;color:#1a1aee;font-family:'Liberation Mono',monospace;transform:scaleX(0.9562);transform-origin:0 0;">00</span>
<span style="left:735.00px;top:153.45px;font-size:12.2px;line-height:12.2px;color:#2e2e8a;font-family:'Liberation Mono',monospace;transform:scaleX(0.9562);transform-origin:0 0;">??</span>
<span style="left:814.00px;top:153.45px;font-size:12.2px;line-height:12.2px;color:#2a8a2a;font-family:'Liberation Mono',monospace;transform:scaleX(0.9562);transform-origin:0 0;">00h</span>
<span style="left:533.00px;top:170.45px;font-size:12.2px;line-height:12.2px;color:#000;font-family:'Liberation Mono',monospace;transform:scaleX(0.9562);transform-origin:0 0;">7ffff7c4181f</span>
<span style="left:624.00px;top:170.45px;font-size:12.2px;line-height:12.2px;color:#1a1aee;font-family:'Liberation Mono',monospace;transform:scaleX(0.9562);transform-origin:0 0;">00</span>
<span style="left:735.00px;top:170.45px;font-size:12.2px;line-height:12.2px;color:#2e2e8a;font-family:'Liberation Mono',monospace;transform:scaleX(0.9562);transform-origin:0 0;">??</span>
<span style="left:814.00px;top:170.45px;font-size:12.2px;line-height:12.2px;color:#2a8a2a;font-family:'Liberation Mono',monospace;transform:scaleX(0.9562);transform-origin:0 0;">00h</span>
<span style="left:533.00px;top:187.45px;font-size:12.2px;line-height:12.2px;color:#000;font-family:'Liberation Mono',monospace;transform:scaleX(0.9562);transform-origin:0 0;">7ffff7c41820</span>
<span style="left:624.00px;top:187.45px;font-size:12.2px;line-height:12.2px;color:#1a1aee;font-family:'Liberation Mono',monospace;transform:scaleX(0.9562);transform-origin:0 0;">f3</span>
<span style="left:735.00px;top:187.45px;font-size:12.2px;line-height:12.2px;color:#2e2e8a;font-family:'Liberation Mono',monospace;transform:scaleX(0.9562);transform-origin:0 0;">??</span>
<span style="left:814.00px;top:187.45px;font-size:12.2px;line-height:12.2px;color:#2a8a2a;font-family:'Liberation Mono',monospace;transform:scaleX(0.9562);transform-origin:0 0;">F3h</span>
<span style="left:533.00px;top:204.45px;font-size:12.2px;line-height:12.2px;color:#000;font-family:'Liberation Mono',monospace;transform:scaleX(0.9562);transform-origin:0 0;">7ffff7c41821</span>
<span style="left:624.00px;top:204.45px;font-size:12.2px;line-height:12.2px;color:#1a1aee;font-family:'Liberation Mono',monospace;transform:scaleX(0.9562);transform-origin:0 0;">0f</span>
<span style="left:735.00px;top:204.45px;font-size:12.2px;line-height:12.2px;color:#2e2e8a;font-family:'Liberation Mono',monospace;transform:scaleX(0.9562);transform-origin:0 0;">??</span>
<span style="left:814.00px;top:204.45px;font-size:12.2px;line-height:12.2px;color:#2a8a2a;font-family:'Liberation Mono',monospace;transform:scaleX(0.9562);transform-origin:0 0;">0Fh</span>
<span style="left:533.00px;top:221.45px;font-size:12.2px;line-height:12.2px;color:#000;font-family:'Liberation Mono',monospace;transform:scaleX(0.9562);transform-origin:0 0;">7ffff7c41822</span>
<span style="left:624.00px;top:221.45px;font-size:12.2px;line-height:12.2px;color:#1a1aee;font-family:'Liberation Mono',monospace;transform:scaleX(0.9562);transform-origin:0 0;">1e</span>
<span style="left:735.00px;top:221.45px;font-size:12.2px;line-height:12.2px;color:#2e2e8a;font-family:'Liberation Mono',monospace;transform:scaleX(0.9562);transform-origin:0 0;">??</span>
<span style="left:814.00px;top:221.45px;font-size:12.2px;line-height:12.2px;color:#2a8a2a;font-family:'Liberation Mono',monospace;transform:scaleX(0.9562);transform-origin:0 0;">1Eh</span>
<span style="left:533.00px;top:238.45px;font-size:12.2px;line-height:12.2px;color:#000;font-family:'Liberation Mono',monospace;transform:scaleX(0.9562);transform-origin:0 0;">7ffff7c41823</span>
<span style="left:624.00px;top:238.45px;font-size:12.2px;line-height:12.2px;color:#1a1aee;font-family:'Liberation Mono',monospace;transform:scaleX(0.9562);transform-origin:0 0;">fa</span>
<span style="left:735.00px;top:238.45px;font-size:12.2px;line-height:12.2px;color:#2e2e8a;font-family:'Liberation Mono',monospace;transform:scaleX(0.9562);transform-origin:0 0;">??</span>
<span style="left:814.00px;top:238.45px;font-size:12.2px;line-height:12.2px;color:#2a8a2a;font-family:'Liberation Mono',monospace;transform:scaleX(0.9562);transform-origin:0 0;">FAh</span>
<span style="left:533.00px;top:255.45px;font-size:12.2px;line-height:12.2px;color:#000;font-family:'Liberation Mono',monospace;transform:scaleX(0.9562);transform-origin:0 0;">7ffff7c41824</span>
<span style="left:624.00px;top:255.45px;font-size:12.2px;line-height:12.2px;color:#1a1aee;font-family:'Liberation Mono',monospace;transform:scaleX(0.9562);transform-origin:0 0;">55</span>
<span style="left:735.00px;top:255.45px;font-size:12.2px;line-height:12.2px;color:#2e2e8a;font-family:'Liberation Mono',monospace;transform:scaleX(0.9562);transform-origin:0 0;">??</span>
<span style="left:814.00px;top:255.45px;font-size:12.2px;line-height:12.2px;color:#2a8a2a;font-family:'Liberation Mono',monospace;transform:scaleX(0.9562);transform-origin:0 0;">55h</span>
<span style="left:863.00px;top:255.45px;font-size:12.2px;line-height:12.2px;color:#2a8a2a;font-family:'Liberation Mono',monospace;transform:scaleX(0.9562);transform-origin:0 0;">U</span>
<span style="left:533.00px;top:272.45px;font-size:12.2px;line-height:12.2px;color:#000;font-family:'Liberation Mono',monospace;transform:scaleX(0.9562);transform-origin:0 0;">7ffff7c41825</span>
<span style="left:624.00px;top:272.45px;font-size:12.2px;line-height:12.2px;color:#1a1aee;font-family:'Liberation Mono',monospace;transform:scaleX(0.9562);transform-origin:0 0;">31</span>
<span style="left:735.00px;top:272.45px;font-size:12.2px;line-height:12.2px;color:#2e2e8a;font-family:'Liberation Mono',monospace;transform:scaleX(0.9562);transform-origin:0 0;">??</span>
<span style="left:814.00px;top:272.45px;font-size:12.2px;line-height:12.2px;color:#2a8a2a;font-family:'Liberation Mono',monospace;transform:scaleX(0.9562);transform-origin:0 0;">31h</span>
<span style="left:863.00px;top:272.45px;font-size:12.2px;line-height:12.2px;color:#2a8a2a;font-family:'Liberation Mono',monospace;transform:scaleX(0.9562);transform-origin:0 0;">1</span>
<span style="left:533.00px;top:289.45px;font-size:12.2px;line-height:12.2px;color:#000;font-family:'Liberation Mono',monospace;transform:scaleX(0.9562);transform-origin:0 0;">7ffff7c41826</span>
<span style="left:624.00px;top:289.45px;font-size:12.2px;line-height:12.2px;color:#1a1aee;font-family:'Liberation Mono',monospace;transform:scaleX(0.9562);transform-origin:0 0;">c0</span>
<span style="left:735.00px;top:289.45px;font-size:12.2px;line-height:12.2px;color:#2e2e8a;font-family:'Liberation Mono',monospace;transform:scaleX(0.9562);transform-origin:0 0;">??</span>
<span style="left:814.00px;top:289.45px;font-size:12.2px;line-height:12.2px;color:#2a8a2a;font-family:'Liberation Mono',monospace;transform:scaleX(0.9562);transform-origin:0 0;">C0h</span>
<span style="left:533.00px;top:306.45px;font-size:12.2px;line-height:12.2px;color:#000;font-family:'Liberation Mono',monospace;transform:scaleX(0.9562);transform-origin:0 0;">7ffff7c41827</span>
<span style="left:624.00px;top:306.45px;font-size:12.2px;line-height:12.2px;color:#1a1aee;font-family:'Liberation Mono',monospace;transform:scaleX(0.9562);transform-origin:0 0;">89</span>
<span style="left:735.00px;top:306.45px;font-size:12.2px;line-height:12.2px;color:#2e2e8a;font-family:'Liberation Mono',monospace;transform:scaleX(0.9562);transform-origin:0 0;">??</span>
<span style="left:814.00px;top:306.45px;font-size:12.2px;line-height:12.2px;color:#2a8a2a;font-family:'Liberation Mono',monospace;transform:scaleX(0.9562);transform-origin:0 0;">89h</span>
<span style="left:533.00px;top:323.45px;font-size:12.2px;line-height:12.2px;color:#000;font-family:'Liberation Mono',monospace;transform:scaleX(0.9562);transform-origin:0 0;">7ffff7c41828</span>
<span style="left:624.00px;top:323.45px;font-size:12.2px;line-height:12.2px;color:#1a1aee;font-family:'Liberation Mono',monospace;transform:scaleX(0.9562);transform-origin:0 0;">fd</span>
<span style="left:735.00px;top:323.45px;font-size:12.2px;line-height:12.2px;color:#2e2e8a;font-family:'Liberation Mono',monospace;transform:scaleX(0.9562);transform-origin:0 0;">??</span>
<span style="left:814.00px;top:323.45px;font-size:12.2px;line-height:12.2px;color:#2a8a2a;font-family:'Liberation Mono',monospace;transform:scaleX(0.9562);transform-origin:0 0;">FDh</span>
<span style="left:533.00px;top:340.45px;font-size:12.2px;line-height:12.2px;color:#000;font-family:'Liberation Mono',monospace;transform:scaleX(0.9562);transform-origin:0 0;">7ffff7c41829</span>
<span style="left:624.00px;top:340.45px;font-size:12.2px;line-height:12.2px;color:#1a1aee;font-family:'Liberation Mono',monospace;transform:scaleX(0.9562);transform-origin:0 0;">ba</span>
<span style="left:735.00px;top:340.45px;font-size:12.2px;line-height:12.2px;color:#2e2e8a;font-family:'Liberation Mono',monospace;transform:scaleX(0.9562);transform-origin:0 0;">??</span>
<span style="left:814.00px;top:340.45px;font-size:12.2px;line-height:12.2px;color:#2a8a2a;font-family:'Liberation Mono',monospace;transform:scaleX(0.9562);transform-origin:0 0;">BAh</span>
<span style="left:533.00px;top:357.45px;font-size:12.2px;line-height:12.2px;color:#000;font-family:'Liberation Mono',monospace;transform:scaleX(0.9562);transform-origin:0 0;">7ffff7c4182a</span>
<span style="left:624.00px;top:357.45px;font-size:12.2px;line-height:12.2px;color:#1a1aee;font-family:'Liberation Mono',monospace;transform:scaleX(0.9562);transform-origin:0 0;">01</span>
<span style="left:735.00px;top:357.45px;font-size:12.2px;line-height:12.2px;color:#2e2e8a;font-family:'Liberation Mono',monospace;transform:scaleX(0.9562);transform-origin:0 0;">??</span>
<span style="left:814.00px;top:357.45px;font-size:12.2px;line-height:12.2px;color:#2a8a2a;font-family:'Liberation Mono',monospace;transform:scaleX(0.9562);transform-origin:0 0;">01h</span>
<span style="left:533.00px;top:374.45px;font-size:12.2px;line-height:12.2px;color:#000;font-family:'Liberation Mono',monospace;transform:scaleX(0.9562);transform-origin:0 0;">7ffff7c4182b</span>
<span style="left:624.00px;top:374.45px;font-size:12.2px;line-height:12.2px;color:#1a1aee;font-family:'Liberation Mono',monospace;transform:scaleX(0.9562);transform-origin:0 0;">00</span>
<span style="left:735.00px;top:374.45px;font-size:12.2px;line-height:12.2px;color:#2e2e8a;font-family:'Liberation Mono',monospace;transform:scaleX(0.9562);transform-origin:0 0;">??</span>
<span style="left:814.00px;top:374.45px;font-size:12.2px;line-height:12.2px;color:#2a8a2a;font-family:'Liberation Mono',monospace;transform:scaleX(0.9562);transform-origin:0 0;">00h</span>
<div style="left:487px;top:390px;width:771px;height:10px;background:#f4f4f4"></div>
<div style="left:507px;top:392px;width:541px;height:6px;background:#d6d6d6;border-radius:3px"></div>
<div style="left:486px;top:408px;width:801px;height:359px;background:#f2f2f2;border-bottom:2px solid #8a8a8a;border-right:2px solid #8a8a8a;box-sizing:border-box"></div>
<div style="left:487px;top:409px;width:798px;height:24px;background:linear-gradient(to right,#a6a6a6 0%,#bdbdbd 40%,#efefef 85%);border:1px solid #828282;box-sizing:border-box"></div>
<svg style="left:491px;top:415px;" width="14" height="13" viewBox="0 0 14 13"><rect x="0.5" y="0.5" width="13" height="12" fill="#f4f4f4" stroke="#333" stroke-width="1"/><path d="M2 1V12" stroke="#222" stroke-dasharray="1 1" stroke-width="2"/><rect x="4" y="2" width="8" height="2" fill="#5a78a8"/><rect x="4" y="5" width="8" height="2" fill="#5a78a8"/><rect x="4" y="8" width="8" height="3" fill="#c8e8d0"/></svg>
<span style="left:509.00px;top:414.15px;font-size:14px;line-height:14px;color:#000;font-family:'Liberation Sans',sans-serif;letter-spacing:0.026px;">Listing:  libc.so.6</span>
<svg style="left:1047px;top:413px;" width="16" height="16" viewBox="0 0 16 16"><path d="M1 2H7L9 4V11H1Z" fill="#c8c8c8"/><path d="M6 6H12L14 8V15H6Z" fill="#c8c8c8" stroke="#f0f0f0" stroke-width="0.8"/></svg>
<svg style="left:1069px;top:413px;" width="16" height="16" viewBox="0 0 16 16"><rect x="1" y="2" width="9" height="12" rx="2" fill="#a8a8a8"/><rect x="5" y="4" width="10" height="12" rx="1" fill="#a8a8a8" stroke="#f0f0f0" stroke-width="0.8"/></svg>
<div style="left:1094px;top:413px;width:1px;height:16px;background:#c4c4c4"></div>
<svg style="left:1098px;top:410px;" width="22" height="22" viewBox="0 0 22 22"><rect x="0.5" y="0.5" width="21" height="21" fill="#f8f8f8" stroke="#bdbdbd"/><rect x="11" y="13" width="8" height="5" fill="#f5d55a"/><path d="M5 3V15L8 12L10.5 17L12 16.3L9.7 11.5H13.5Z" fill="#fff" stroke="#000" stroke-width="1"/></svg>
<div style="left:1127px;top:413px;width:1px;height:16px;background:#c4c4c4"></div>
<svg style="left:1136px;top:412px;" width="18" height="18" viewBox="0 0 18 18"><rect x="1.5" y="2.5" width="15" height="5" fill="#fff" stroke="#333"/><rect x="6" y="4" width="6" height="2" fill="#f0a030"/><path d="M1.5 9.5H16.5M1.5 12H16.5" stroke="#333"/><path d="M9 11V17M6.5 14.5L9 17L11.5 14.5" stroke="#333" fill="none" stroke-width="1.2"/></svg>
<svg style="left:1158px;top:412px;" width="18" height="18" viewBox="0 0 18 18"><path d="M2 2V16M6 2V16M12 2V16M16 2V16" stroke="#6aa0e0" stroke-width="1"/><path d="M4 13L8 9L10 11L15 5" fill="none" stroke="#3a9a3a" stroke-width="2"/></svg>
<div style="left:1184px;top:413px;width:1px;height:16px;background:#c4c4c4"></div>
<svg style="left:1192px;top:412px;" width="18" height="18" viewBox="0 0 18 18"><rect x="1" y="5" width="16" height="11" rx="1.5" fill="#333"/><rect x="5" y="2.5" width="8" height="3.5" fill="#333"/><circle cx="9" cy="10.5" r="4" fill="#777" stroke="#111" stroke-width="1.2"/><circle cx="9" cy="10.5" r="1.8" fill="#222"/></svg>
<div style="left:1218px;top:413px;width:1px;height:16px;background:#c4c4c4"></div>
<svg style="left:1226px;top:413px;" width="18" height="16" viewBox="0 0 18 16"><rect x="2" y="1.5" width="12" height="13" fill="#fff" stroke="#777" stroke-dasharray="1 1"/><rect x="4" y="6" width="7" height="4" fill="#7a9ad0"/><rect x="12" y="1" width="4" height="15" fill="#f0b030" stroke="#a07010" stroke-width="0.6"/></svg>
<svg style="left:1247px;top:417px;" width="10" height="6" viewBox="0 0 10 6"><path d="M1 1L9 1L5 5Z" fill="#000"/></svg>
<div style="left:1262px;top:413px;width:1px;height:16px;background:#c4c4c4"></div>
<svg style="left:1264px;top:413px;" width="16" height="16" viewBox="0 0 16 16"><path d="M3.0 3.0L13.0 13.0M13.0 3.0L3.0 13.0" stroke="#000" stroke-width="2.6" stroke-linecap="butt"/></svg>
<div style="left:487px;top:433px;width:798px;height:26px;background:#f2f2f2"></div>
<div style="left:488px;top:434px;width:108px;height:22px;background:#fff;border:1px solid #c8c8c8;border-bottom:none;box-sizing:border-box"></div>
<span style="left:506.00px;top:438.15px;font-size:14px;line-height:14px;color:#000;font-family:'Liberation Sans',sans-serif;letter-spacing:-0.483px;">termmines</span>
<div style="left:597px;top:433px;width:100px;height:23px;background:#2a74c5;border-top:1px solid #5fb0f0;box-sizing:border-box"></div>
<span style="left:614.00px;top:437.15px;font-size:14px;line-height:14px;color:#fff;font-family:'Liberation Sans',sans-serif;letter-spacing:-0.281px;">*libc.so.6</span>
<svg style="left:678px;top:437px;" width="16" height="16" viewBox="0 0 16 16"><path d="M4.0 4.0L12.0 12.0M12.0 4.0L4.0 12.0" stroke="#fff" stroke-width="2.2" stroke-linecap="butt"/></svg>
<div style="left:487px;top:455px;width:798px;height:3px;background:#2a74c5"></div>
<div style="left:487px;top:459px;width:17px;height:296px;background:#f0f0f0"></div>
<div style="left:494px;top:460px;width:3px;height:143px;background:#a8c4e6"></div>
<div style="left:494px;top:606px;width:3px;height:147px;background:#a6a6a6"></div>
<div style="left:504px;top:459px;width:70px;height:296px;background:#fff"></div>
<div style="left:574px;top:459px;width:4px;height:296px;background:#f0f0f0"></div>
<div style="left:574px;top:606px;width:3px;height:3px;background:#aaa;border-radius:50%"></div>
<div style="left:574px;top:611px;width:3px;height:3px;background:#aaa;border-radius:50%"></div>
<div style="left:574px;top:616px;width:3px;height:3px;background:#aaa;border-radius:50%"></div>
<svg style="left:555px;top:745px;" width="12" height="10" viewBox="0 0 12 10"><path d="M1 1H11L6 8Z" fill="#b8b8b8"/></svg>
<svg style="left:486px;top:596px;" width="18" height="17" viewBox="0 0 18 17"><circle cx="9" cy="9.5" r="7" fill="#0b67b0"/><path d="M2 6.5H15" stroke="#000" stroke-width="1.6"/><path d="M11.5 2.5L17 6.5L11.5 11Z" fill="#000"/><path d="M11 7.5V11.5H14" stroke="#fff" stroke-width="0.8" fill="none"/></svg>
<div style="left:578px;top:459px;width:680px;height:296px;background:#fff"></div>
<div style="left:578px;top:460px;width:680px;height:154px;background:#d0dcec"></div>
<div style="left:1258px;top:459px;width:27px;height:296px;background:#f4f4f4"></div>
<div style="left:1261px;top:481px;width:6px;height:17px;background:#d6d6d6;border-radius:3px"></div>
<div style="left:487px;top:755px;width:771px;height:8px;background:#f4f4f4"></div>
<div style="left:580px;top:756px;width:440px;height:6px;background:#d6d6d6;border-radius:3px"></div>
<div style="left:1268px;top:466px;width:10px;height:13px;background:repeating-linear-gradient(to bottom,#f0a020 0px,#f0a020 1px,#e6d6a8 1px,#e6d6a8 3px);border:1px solid #f0a020;box-sizing:border-box"></div>
<div style="left:1268px;top:492px;width:10px;height:5px;background:repeating-linear-gradient(to bottom,#f0a020 0px,#f0a020 1px,#e6d6a8 1px,#e6d6a8 3px);border:1px solid #f0a020;box-sizing:border-box"></div>
<div style="left:1268px;top:511px;width:10px;height:14px;background:repeating-linear-gradient(to bottom,#f0a020 0px,#f0a020 1px,#e6d6a8 1px,#e6d6a8 3px);border:1px solid #f0a020;box-sizing:border-box"></div>
<div style="left:1268px;top:529px;width:10px;height:16px;background:repeating-linear-gradient(to bottom,#f0a020 0px,#f0a020 1px,#e6d6a8 1px,#e6d6a8 3px);border:1px solid #f0a020;box-sizing:border-box"></div>
<div style="left:1268px;top:545px;width:10px;height:8px;background:repeating-linear-gradient(to bottom,#f0a020 0px,#f0a020 1px,#e6d6a8 1px,#e6d6a8 3px);border:1px solid #f0a020;box-sizing:border-box"></div>
<div style="left:1268px;top:592px;width:10px;height:5px;background:repeating-linear-gradient(to bottom,#f0a020 0px,#f0a020 1px,#e6d6a8 1px,#e6d6a8 3px);border:1px solid #f0a020;box-sizing:border-box"></div>
<div style="left:1268px;top:621px;width:10px;height:38px;background:repeating-linear-gradient(to bottom,#f0a020 0px,#f0a020 1px,#e6d6a8 1px,#e6d6a8 3px);border:1px solid #f0a020;box-sizing:border-box"></div>
<div style="left:1268px;top:701px;width:10px;height:5px;background:#e8e090;border:1px solid #f0d030;box-sizing:border-box"></div>
<div style="left:1277px;top:466px;width:7px;height:4px;background:#b0b0b0"></div>
<div style="left:1277px;top:472px;width:7px;height:10px;background:#b0b0b0"></div>
<div style="left:1277px;top:478px;width:7px;height:3px;background:#b0b0b0"></div>
<div style="left:1277px;top:486px;width:7px;height:12px;background:#b0b0b0"></div>
<div style="left:1277px;top:498px;width:7px;height:16px;background:#b0b0b0"></div>
<div style="left:1277px;top:515px;width:7px;height:10px;background:#b0b0b0"></div>
<div style="left:1277px;top:526px;width:7px;height:4px;background:#b0b0b0"></div>
<div style="left:1277px;top:536px;width:7px;height:14px;background:#b0b0b0"></div>
<div style="left:1277px;top:553px;width:7px;height:7px;background:#b0b0b0"></div>
<div style="left:1277px;top:568px;width:7px;height:4px;background:#b0b0b0"></div>
<div style="left:1277px;top:575px;width:7px;height:8px;background:#b0b0b0"></div>
<div style="left:1277px;top:584px;width:7px;height:4px;background:#b0b0b0"></div>
<div style="left:1277px;top:592px;width:7px;height:6px;background:#b0b0b0"></div>
<div style="left:1277px;top:621px;width:7px;height:12px;background:#b0b0b0"></div>
<div style="left:1277px;top:636px;width:7px;height:6px;background:#b0b0b0"></div>
<div style="left:1277px;top:644px;width:7px;height:11px;background:#b0b0b0"></div>
<div style="left:1277px;top:662px;width:7px;height:12px;background:#b0b0b0"></div>
<div style="left:1277px;top:700px;width:7px;height:6px;background:#b0b0b0"></div>
<div style="left:1269px;top:478px;width:9px;height:4px;background:#c8d0dc"></div>
<span style="left:779.00px;top:466.95px;font-size:12.2px;line-height:12.2px;color:#7a7a7a;font-family:'Liberation Mono',monospace;transform:scaleX(0.9562);transform-origin:0 0;">**************************************************************</span>
<span style="left:779.00px;top:483.95px;font-size:12.2px;line-height:12.2px;color:#7a7a7a;font-family:'Liberation Mono',monospace;transform:scaleX(0.9562);transform-origin:0 0;">*</span>
<span style="left:967.00px;top:481.45px;font-size:12.2px;line-height:12.2px;color:#7a7a7a;font-family:'Liberation Mono',monospace;transform:scaleX(0.9562);transform-origin:0 0;">FUNCTION</span>
<span style="left:1206.00px;top:483.95px;font-size:12.2px;line-height:12.2px;color:#7a7a7a;font-family:'Liberation Mono',monospace;transform:scaleX(0.9562);transform-origin:0 0;">*</span>
<span style="left:779.00px;top:500.95px;font-size:12.2px;line-height:12.2px;color:#7a7a7a;font-family:'Liberation Mono',monospace;transform:scaleX(0.9562);transform-origin:0 0;">**************************************************************</span>
<div style="left:778px;top:512px;width:1px;height:16px;background:#f0a0a8"></div>
<span style="left:779.00px;top:515.45px;font-size:12.2px;line-height:12.2px;color:#000;font-family:'Liberation Mono',monospace;transform:scaleX(0.9562);transform-origin:0 0;">undefined</span>
<span style="left:849.00px;top:515.45px;font-size:12.2px;line-height:12.2px;color:#ff00ff;font-family:'Liberation Mono',monospace;transform:scaleX(0.9562);transform-origin:0 0;">srandom</span>
<span style="left:898.00px;top:515.45px;font-size:12.2px;line-height:12.2px;color:#000;font-family:'Liberation Mono',monospace;transform:scaleX(0.9562);transform-origin:0 0;">()</span>
<span style="left:668.00px;top:532.45px;font-size:12.2px;line-height:12.2px;color:#1a8a8a;font-family:'Liberation Mono',monospace;transform:scaleX(0.9562);transform-origin:0 0;">undefined</span>
<svg style="left:779px;top:526px;" width="16" height="14" viewBox="0 0 16 14"><path d="M8 1L15 13H1Z" fill="#f5d040" stroke="#c08a00" stroke-width="1"/><path d="M8 5V9M8 10.5V12" stroke="#000" stroke-width="1.4"/></svg>
<span style="left:797.00px;top:532.45px;font-size:12.2px;line-height:12.2px;color:#e01010;font-family:'Liberation Mono',monospace;transform:scaleX(0.9562);transform-origin:0 0;">&lt;UNASSIGNED&gt;</span>
<span style="left:899.00px;top:532.45px;font-size:12.2px;line-height:12.2px;color:#1a8a8a;font-family:'Liberation Mono',monospace;transform:scaleX(0.9562);transform-origin:0 0;">&lt;RETURN&gt;</span>
<span style="left:779.00px;top:549.45px;font-size:12.2px;line-height:12.2px;color:#ff00ff;font-family:'Liberation Mono',monospace;transform:scaleX(0.9562);transform-origin:0 0;">__srandom</span>
<span style="left:1116.00px;top:549.45px;font-size:12.2px;line-height:12.2px;color:#1a7a1a;font-family:'Liberation Mono',monospace;transform:scaleX(0.9562);transform-origin:0 0;">XREF[1]:</span>
<span style="left:1206.00px;top:549.45px;font-size:12.2px;line-height:12.2px;color:#1a7a1a;font-family:'Liberation Mono',monospace;transform:scaleX(0.9562);transform-origin:0 0;">Entry Po</span>
<span style="left:779.00px;top:566.45px;font-size:12.2px;line-height:12.2px;color:#ff00ff;font-family:'Liberation Mono',monospace;transform:scaleX(0.9562);transform-origin:0 0;">srand</span>
<span style="left:779.00px;top:583.45px;font-size:12.2px;line-height:12.2px;color:#ff00ff;font-family:'Liberation Mono',monospace;transform:scaleX(0.9562);transform-origin:0 0;">srandom</span>
<span style="left:635.00px;top:600.45px;font-size:12.2px;line-height:12.2px;color:#000;font-family:'Liberation Mono',monospace;transform:scaleX(0.9562);transform-origin:0 0;">00141820</span>
<span style="left:699.00px;top:600.45px;font-size:12.2px;line-height:12.2px;color:#1a1aee;font-family:'Liberation Mono',monospace;transform:scaleX(0.9562);transform-origin:0 0;">f3 0f 1e fa</span>
<span style="left:808.00px;top:600.45px;font-size:12.2px;line-height:12.2px;color:#1a2a8a;font-family:'Liberation Mono',monospace;transform:scaleX(0.9562);transform-origin:0 0;">ENDBR64</span>
<span style="left:635.00px;top:617.45px;font-size:12.2px;line-height:12.2px;color:#000;font-family:'Liberation Mono',monospace;transform:scaleX(0.9562);transform-origin:0 0;">00141824</span>
<span style="left:699.00px;top:617.45px;font-size:12.2px;line-height:12.2px;color:#1a1aee;font-family:'Liberation Mono',monospace;transform:scaleX(0.9562);transform-origin:0 0;">55</span>
<span style="left:808.00px;top:617.45px;font-size:12.2px;line-height:12.2px;color:#1a2a8a;font-family:'Liberation Mono',monospace;transform:scaleX(0.9562);transform-origin:0 0;">PUSH</span>
<span style="left:888.00px;top:617.45px;font-size:12.2px;line-height:12.2px;color:#8a8a10;font-family:'Liberation Mono',monospace;transform:scaleX(0.9562);transform-origin:0 0;">RBP</span>
<span style="left:635.00px;top:634.45px;font-size:12.2px;line-height:12.2px;color:#000;font-family:'Liberation Mono',monospace;transform:scaleX(0.9562);transform-origin:0 0;">00141825</span>
<span style="left:699.00px;top:634.45px;font-size:12.2px;line-height:12.2px;color:#1a1aee;font-family:'Liberation Mono',monospace;transform:scaleX(0.9562);transform-origin:0 0;">31 c0</span>
<span style="left:808.00px;top:634.45px;font-size:12.2px;line-height:12.2px;color:#1a2a8a;font-family:'Liberation Mono',monospace;transform:scaleX(0.9562);transform-origin:0 0;">XOR</span>
<span style="left:888.00px;top:634.45px;font-size:12.2px;line-height:12.2px;color:#8a8a10;font-family:'Liberation Mono',monospace;transform:scaleX(0.9562);transform-origin:0 0;">EAX,EAX</span>
<span style="left:635.00px;top:651.45px;font-size:12.2px;line-height:12.2px;color:#000;font-family:'Liberation Mono',monospace;transform:scaleX(0.9562);transform-origin:0 0;">00141827</span>
<span style="left:699.00px;top:651.45px;font-size:12.2px;line-height:12.2px;color:#1a1aee;font-family:'Liberation Mono',monospace;transform:scaleX(0.9562);transform-origin:0 0;">89 fd</span>
<span style="left:808.00px;top:651.45px;font-size:12.2px;line-height:12.2px;color:#1a2a8a;font-family:'Liberation Mono',monospace;transform:scaleX(0.9562);transform-origin:0 0;">MOV</span>
<span style="left:888.00px;top:651.45px;font-size:12.2px;line-height:12.2px;color:#8a8a10;font-family:'Liberation Mono',monospace;transform:scaleX(0.9562);transform-origin:0 0;">EBP,EDI</span>
<span style="left:635.00px;top:668.45px;font-size:12.2px;line-height:12.2px;color:#000;font-family:'Liberation Mono',monospace;transform:scaleX(0.9562);transform-origin:0 0;">00141829</span>
<span style="left:699.00px;top:668.45px;font-size:12.2px;line-height:12.2px;color:#1a1aee;font-family:'Liberation Mono',monospace;transform:scaleX(0.9562);transform-origin:0 0;">ba 01 00</span>
<span style="left:808.00px;top:668.45px;font-size:12.2px;line-height:12.2px;color:#1a2a8a;font-family:'Liberation Mono',monospace;transform:scaleX(0.9562);transform-origin:0 0;">MOV</span>
<span style="left:888.00px;top:668.45px;font-size:12.2px;line-height:12.2px;color:#8a8a10;font-family:'Liberation Mono',monospace;transform:scaleX(0.9562);transform-origin:0 0;">EDX,</span>
<span style="left:916.00px;top:668.45px;font-size:12.2px;line-height:12.2px;color:#1a8a1a;font-family:'Liberation Mono',monospace;transform:scaleX(0.9562);transform-origin:0 0;">0x1</span>
<span style="left:699.00px;top:685.45px;font-size:12.2px;line-height:12.2px;color:#1a1aee;font-family:'Liberation Mono',monospace;transform:scaleX(0.9562);transform-origin:0 0;">00 00</span>
<span style="left:635.00px;top:702.45px;font-size:12.2px;line-height:12.2px;color:#000;font-family:'Liberation Mono',monospace;transform:scaleX(0.9562);transform-origin:0 0;">0014182e</span>
<span style="left:699.00px;top:702.45px;font-size:12.2px;line-height:12.2px;color:#1a1aee;font-family:'Liberation Mono',monospace;transform:scaleX(0.9562);transform-origin:0 0;">f0 0f b1</span>
<span style="left:808.00px;top:702.45px;font-size:12.2px;line-height:12.2px;color:#1a2a8a;font-family:'Liberation Mono',monospace;transform:scaleX(0.9562);transform-origin:0 0;">CMPXCHG....</span>
<span style="left:699.00px;top:719.45px;font-size:12.2px;line-height:12.2px;color:#1a1aee;font-family:'Liberation Mono',monospace;transform:scaleX(0.9562);transform-origin:0 0;">15 12 af</span>
<span style="left:699.00px;top:736.45px;font-size:12.2px;line-height:12.2px;color:#1a1aee;font-family:'Liberation Mono',monospace;transform:scaleX(0.9562);transform-origin:0 0;">1b 00</span>
<span style="left:888.00px;top:702.45px;font-size:12.2px;line-height:12.2px;color:#000;font-family:'Liberation Mono',monospace;transform:scaleX(0.9562);transform-origin:0 0;">dword ptr [</span>
<span style="left:965.00px;top:702.45px;font-size:12.2px;line-height:12.2px;color:#1a1aee;font-family:'Liberation Mono',monospace;transform:scaleX(0.9562);transform-origin:0 0;">lock</span>
<span style="left:993.00px;top:702.45px;font-size:12.2px;line-height:12.2px;color:#000;font-family:'Liberation Mono',monospace;transform:scaleX(0.9562);transform-origin:0 0;">],</span>
<span style="left:1007.00px;top:702.45px;font-size:12.2px;line-height:12.2px;color:#8a8a10;font-family:'Liberation Mono',monospace;transform:scaleX(0.9562);transform-origin:0 0;">EDX</span>
<span style="left:1228.00px;top:702.45px;font-size:12.2px;line-height:12.2px;color:#b8b8b8;font-family:'Liberation Mono',monospace;transform:scaleX(0.9562);transform-origin:0 0;">= ??</span>
<div style="left:1258px;top:545px;width:10px;height:18px;background:#f4f4f4"></div>
<div style="left:1291px;top:79px;width:628px;height:690px;background:#f2f2f2;border:1px solid #8a8a8a;border-right-color:#90b4dc;box-sizing:border-box"></div>
<div style="left:1292px;top:78px;width:626px;height:24px;background:linear-gradient(to right,#2a72c3 0%,#3b80cb 28%,#9fc0e3 42%,#e6edf5 55%,#f2f2f2 62%);border:1px solid #7b8ea8;box-sizing:border-box"></div>
<svg style="left:1294px;top:82px;" width="18" height="18" viewBox="0 0 18 18"><circle cx="9" cy="9" r="7.6" fill="none" stroke="#cfe0f5" stroke-width="0.9"/><circle cx="9" cy="9" r="6.6" fill="#0b5fa8"/><path d="M5.2 5.2A5.4 5.4 0 0 1 12.8 12.8 Z" fill="#fff"/></svg>
<span style="left:1314.00px;top:84.15px;font-size:14px;line-height:14px;color:#fff;font-family:'Liberation Sans',sans-serif;letter-spacing:0.006px;">Breakpoints</span>
<svg style="left:1638px;top:82px;" width="18" height="18" viewBox="0 0 18 18"><circle cx="9" cy="9" r="7" fill="#6cc04a" stroke="#3a8a2a" stroke-width="1"/><path d="M9 5V13M5 9H13" stroke="#fff" stroke-width="2.2"/></svg>
<svg style="left:1659px;top:86px;" width="10" height="6" viewBox="0 0 10 6"><path d="M1 1L9 1L5 5Z" fill="#000"/></svg>
<svg style="left:1675px;top:82px;" width="17" height="17" viewBox="0 0 17 17"><circle cx="8" cy="9" r="6.5" fill="#8e8e8e" stroke="#8e8e8e" stroke-width="0"/></svg>
<svg style="left:1697px;top:82px;" width="17" height="17" viewBox="0 0 17 17"><circle cx="8" cy="9" r="6.5" fill="#0b5fa8" stroke="#0b5fa8" stroke-width="0"/><path d="M13 1L13.8 3.2L16 3.4L14.3 4.8L15 7L13 5.7L11 7L11.7 4.8L10 3.4L12.2 3.2Z" fill="#f0b020" stroke="#a07010" stroke-width="0.4"/></svg>
<svg style="left:1719px;top:82px;" width="17" height="17" viewBox="0 0 17 17"><circle cx="8" cy="9" r="6.5" fill="#a8a8a8" stroke="#a8a8a8" stroke-width="0"/></svg>
<svg style="left:1741px;top:82px;" width="17" height="17" viewBox="0 0 17 17"><circle cx="8" cy="9" r="6.5" fill="none" stroke="#0b6fc8" stroke-width="2.2"/><path d="M13 1L13.8 3.2L16 3.4L14.3 4.8L15 7L13 5.7L11 7L11.7 4.8L10 3.4L12.2 3.2Z" fill="#f0b020" stroke="#a07010" stroke-width="0.4"/></svg>
<svg style="left:1763px;top:83px;" width="17" height="17" viewBox="0 0 17 17"><circle cx="6" cy="6" r="4" fill="#a8a8a8"/><circle cx="11" cy="11" r="4" fill="#a8a8a8"/></svg>
<div style="left:1789px;top:84px;width:1px;height:16px;background:#c4c4c4"></div>
<svg style="left:1797px;top:82px;" width="17" height="17" viewBox="0 0 17 17"><circle cx="8" cy="9" r="6.5" fill="#b8b8b8" stroke="#b8b8b8" stroke-width="0"/><path d="M5 6L11 12M11 6L5 12" stroke="#fff" stroke-width="1.8"/></svg>
<svg style="left:1819px;top:82px;" width="17" height="17" viewBox="0 0 17 17"><circle cx="8" cy="9" r="6.5" fill="#0b6fc8" stroke="#0b6fc8" stroke-width="0"/><path d="M5 6L11 12M11 6L5 12" stroke="#fff" stroke-width="1.8"/><path d="M13 1L13.8 3.2L16 3.4L14.3 4.8L15 7L13 5.7L11 7L11.7 4.8L10 3.4L12.2 3.2Z" fill="#f0b020" stroke="#a07010" stroke-width="0.4"/></svg>
<div style="left:1844px;top:84px;width:1px;height:16px;background:#c4c4c4"></div>
<svg style="left:1852px;top:82px;" width="18" height="18" viewBox="0 0 18 18"><circle cx="8" cy="8" r="6" fill="#eee" stroke="#777" stroke-width="1.4"/><path d="M5 6L7 8L5 10M11 6L9 8L11 10" stroke="#555" fill="none" stroke-width="1"/><path d="M12 12L16 16" stroke="#555" stroke-width="2"/></svg>
<svg style="left:1873px;top:82px;" width="18" height="18" viewBox="0 0 18 18"><g stroke="#8a8a8a" stroke-width="2"><path d="M2 4H16M2 9H16M2 14H16"/></g><g fill="#8a8a8a"><circle cx="6" cy="4" r="2.3"/><circle cx="12" cy="9" r="2.3"/><circle cx="7" cy="14" r="2.3"/></g></svg>
<div style="left:1895px;top:84px;width:1px;height:16px;background:#c4c4c4"></div>
<svg style="left:1898px;top:83px;" width="16" height="16" viewBox="0 0 16 16"><path d="M3.0 3.0L13.0 13.0M13.0 3.0L3.0 13.0" stroke="#000" stroke-width="2.6" stroke-linecap="butt"/></svg>
<div style="left:1292px;top:102px;width:626px;height:282px;background:#fff;border-left:1px solid #a8c0e0;border-bottom:1px solid #a8c0e0;box-sizing:border-box"></div>
<div style="left:1293px;top:102px;width:625px;height:25px;background:#fff;border-bottom:1px solid #dcdcdc;box-sizing:border-box"></div>
<div style="left:1315px;top:102px;width:1px;height:25px;background:#e0e0e0"></div>
<div style="left:1438px;top:102px;width:1px;height:25px;background:#e0e0e0"></div>
<div style="left:1559px;top:102px;width:1px;height:25px;background:#e0e0e0"></div>
<div style="left:1651px;top:102px;width:1px;height:25px;background:#e0e0e0"></div>
<div style="left:1720px;top:102px;width:1px;height:25px;background:#e0e0e0"></div>
<div style="left:1842px;top:102px;width:1px;height:25px;background:#e0e0e0"></div>
<div style="left:1887px;top:102px;width:1px;height:25px;background:#e0e0e0"></div>
<span style="left:1299.00px;top:108.15px;font-size:14px;line-height:14px;color:#000;font-family:'Liberation Sans',sans-serif;">...</span>
<span style="left:1362.00px;top:108.15px;font-size:14px;line-height:14px;color:#000;font-family:'Liberation Sans',sans-serif;letter-spacing:-0.113px;">Na...</span>
<svg style="left:1394px;top:106px;" width="15" height="15" viewBox="0 0 15 15"><g transform="translate(1,2)"><path d="M1.5 1.5H3.5V3.5H5.5V5.5H7.5V7.5H9.5V9.5H11.5V11.5H1.5Z" fill="#d4d4d4" stroke="#666" stroke-width="1" stroke-linejoin="round"/><path d="M2.5 2.8H3M2.5 8.6H9M2.5 10.6H11" stroke="#fff" stroke-width="0.9"/></g></svg>
<span style="left:1410.00px;top:105.99px;font-size:13px;line-height:13px;color:#000;font-family:'Liberation Sans',sans-serif;font-weight:bold;">3</span>
<span style="left:1481.00px;top:108.15px;font-size:14px;line-height:14px;color:#000;font-family:'Liberation Sans',sans-serif;letter-spacing:0.262px;">Add..</span>
<svg style="left:1515px;top:106px;" width="15" height="15" viewBox="0 0 15 15"><g transform="translate(1,2)"><path d="M1.5 1.5H3.5V3.5H5.5V5.5H7.5V7.5H9.5V9.5H11.5V11.5H1.5Z" fill="#d4d4d4" stroke="#666" stroke-width="1" stroke-linejoin="round"/><path d="M2.5 2.8H3M2.5 8.6H9M2.5 10.6H11" stroke="#fff" stroke-width="0.9"/></g></svg>
<span style="left:1532.00px;top:105.99px;font-size:13px;line-height:13px;color:#000;font-family:'Liberation Sans',sans-serif;font-weight:bold;">2</span>
<span style="left:1601.00px;top:108.15px;font-size:14px;line-height:14px;color:#000;font-family:'Liberation Sans',sans-serif;">..</span>
<svg style="left:1608px;top:106px;" width="15" height="15" viewBox="0 0 15 15"><g transform="translate(1,2)"><path d="M1.5 1.5H3.5V3.5H5.5V5.5H7.5V7.5H9.5V9.5H11.5V11.5H1.5Z" fill="#d4d4d4" stroke="#666" stroke-width="1" stroke-linejoin="round"/><path d="M2.5 2.8H3M2.5 8.6H9M2.5 10.6H11" stroke="#fff" stroke-width="0.9"/></g></svg>
<span style="left:1625.00px;top:105.99px;font-size:13px;line-height:13px;color:#000;font-family:'Liberation Sans',sans-serif;font-weight:bold;">1</span>
<span style="left:1664.00px;top:108.15px;font-size:14px;line-height:14px;color:#000;font-family:'Liberation Sans',sans-serif;letter-spacing:0.113px;">Length</span>
<span style="left:1765.00px;top:108.15px;font-size:14px;line-height:14px;color:#000;font-family:'Liberation Sans',sans-serif;letter-spacing:-0.404px;">Kinds</span>
<span style="left:1852.00px;top:108.15px;font-size:14px;line-height:14px;color:#000;font-family:'Liberation Sans',sans-serif;letter-spacing:-0.048px;">Lo...</span>
<span style="left:1898.00px;top:108.15px;font-size:14px;line-height:14px;color:#000;font-family:'Liberation Sans',sans-serif;">...</span>
<div style="left:1293px;top:128px;width:625px;height:20px;background:#eef5fc"></div>
<svg style="left:1296px;top:130px;" width="16" height="16" viewBox="0 0 16 16"><circle cx="8" cy="8" r="6.3" fill="#0b67b0"/></svg>
<span style="left:1443.00px;top:133.04px;font-size:13px;line-height:13px;color:#000;font-family:'Liberation Mono',monospace;letter-spacing:0.074px;">00141820</span>
<span style="left:1565.00px;top:131.15px;font-size:14px;line-height:14px;color:#000;font-family:'Liberation Sans',sans-serif;letter-spacing:-0.040px;">libc.so.6</span>
<span style="left:1692.00px;top:133.04px;font-size:13px;line-height:13px;color:#000;font-family:'Liberation Mono',monospace;letter-spacing:-0.134px;">0x1</span>
<span style="left:1726.00px;top:131.15px;font-size:14px;line-height:14px;color:#000;font-family:'Liberation Sans',sans-serif;letter-spacing:-1.247px;">SW_EXECUTE</span>
<span style="left:1876.00px;top:133.04px;font-size:13px;line-height:13px;color:#000;font-family:'Liberation Mono',monospace;">1</span>
<div style="left:1897px;top:131px;width:14px;height:14px;background:#f4f4f4;border:1px solid #b8b8b8;border-radius:2px;box-sizing:border-box"></div>
<svg style="left:1296px;top:150px;" width="16" height="16" viewBox="0 0 16 16"><circle cx="8" cy="8" r="6.3" fill="#0b67b0"/></svg>
<span style="left:1443.00px;top:153.04px;font-size:13px;line-height:13px;color:#000;font-family:'Liberation Mono',monospace;letter-spacing:0.074px;">00141e90</span>
<span style="left:1565.00px;top:151.15px;font-size:14px;line-height:14px;color:#000;font-family:'Liberation Sans',sans-serif;letter-spacing:-0.040px;">libc.so.6</span>
<span style="left:1692.00px;top:153.04px;font-size:13px;line-height:13px;color:#000;font-family:'Liberation Mono',monospace;letter-spacing:-0.134px;">0x1</span>
<span style="left:1726.00px;top:151.15px;font-size:14px;line-height:14px;color:#000;font-family:'Liberation Sans',sans-serif;letter-spacing:-1.247px;">SW_EXECUTE</span>
<span style="left:1876.00px;top:153.04px;font-size:13px;line-height:13px;color:#000;font-family:'Liberation Mono',monospace;">1</span>
<div style="left:1897px;top:151px;width:14px;height:14px;background:#f4f4f4;border:1px solid #b8b8b8;border-radius:2px;box-sizing:border-box"></div>
<span style="left:1297.00px;top:392.15px;font-size:14px;line-height:14px;color:#000;font-family:'Liberation Sans',sans-serif;">Filter:</span>
<div style="left:1343px;top:388px;width:509px;height:23px;background:#fff;border:1px solid #c6c6c6;box-sizing:border-box"></div>
<svg style="left:1856px;top:390px;" width="18" height="18" viewBox="0 0 18 18"><path d="M4.5 1.5H11.5L15.5 5.5V16.5H4.5Z" fill="#cfe3fa" stroke="#3d8ee6" stroke-width="1"/><path d="M5 13H15" stroke="#5aa0ee" stroke-width="1.6"/><path d="M6 6L2.5 9L6 12M10 6L13.5 9L10 12" fill="none" stroke="#3d8ee6" stroke-width="1.6"/></svg>
<svg style="left:1881px;top:390px;" width="18" height="18" viewBox="0 0 18 18"><g stroke="#8a8a8a" stroke-width="2"><path d="M2 4H16M2 9H16M2 14H16"/></g><g fill="#8a8a8a"><circle cx="6" cy="4" r="2.3"/><circle cx="12" cy="9" r="2.3"/><circle cx="7" cy="14" r="2.3"/></g></svg>
<svg style="left:1904px;top:395px;" width="10" height="6" viewBox="0 0 10 6"><path d="M1 1L9 1L5 5Z" fill="#000"/></svg>
<div style="left:1600px;top:416px;width:3px;height:3px;background:#aaa;border-radius:50%"></div>
<div style="left:1605px;top:416px;width:3px;height:3px;background:#aaa;border-radius:50%"></div>
<div style="left:1610px;top:416px;width:3px;height:3px;background:#aaa;border-radius:50%"></div>
<div style="left:1292px;top:421px;width:626px;height:283px;background:#fff;border-left:1px solid #c0c0c0;border-bottom:1px solid #9a9a9a;box-sizing:border-box"></div>
<div style="left:1293px;top:421px;width:625px;height:25px;background:#fff;border-bottom:1px solid #dcdcdc;box-sizing:border-box"></div>
<div style="left:1315px;top:421px;width:1px;height:25px;background:#e0e0e0"></div>
<div style="left:1458px;top:421px;width:1px;height:25px;background:#e0e0e0"></div>
<div style="left:1601px;top:421px;width:1px;height:25px;background:#e0e0e0"></div>
<div style="left:1744px;top:421px;width:1px;height:25px;background:#e0e0e0"></div>
<div style="left:1887px;top:421px;width:1px;height:25px;background:#e0e0e0"></div>
<span style="left:1299.00px;top:427.15px;font-size:14px;line-height:14px;color:#000;font-family:'Liberation Sans',sans-serif;">...</span>
<span style="left:1368.00px;top:427.15px;font-size:14px;line-height:14px;color:#000;font-family:'Liberation Sans',sans-serif;letter-spacing:-0.087px;">Name</span>
<svg style="left:1416px;top:425px;" width="15" height="15" viewBox="0 0 15 15"><g transform="translate(1,2)"><path d="M1.5 1.5H3.5V3.5H5.5V5.5H7.5V7.5H9.5V9.5H11.5V11.5H1.5Z" fill="#d4d4d4" stroke="#666" stroke-width="1" stroke-linejoin="round"/><path d="M2.5 2.8H3M2.5 8.6H9M2.5 10.6H11" stroke="#fff" stroke-width="0.9"/></g></svg>
<span style="left:1432.00px;top:424.99px;font-size:13px;line-height:13px;color:#000;font-family:'Liberation Sans',sans-serif;font-weight:bold;">2</span>
<span style="left:1504.00px;top:427.15px;font-size:14px;line-height:14px;color:#000;font-family:'Liberation Sans',sans-serif;letter-spacing:0.091px;">Address</span>
<svg style="left:1558px;top:425px;" width="15" height="15" viewBox="0 0 15 15"><g transform="translate(1,2)"><path d="M1.5 1.5H3.5V3.5H5.5V5.5H7.5V7.5H9.5V9.5H11.5V11.5H1.5Z" fill="#d4d4d4" stroke="#666" stroke-width="1" stroke-linejoin="round"/><path d="M2.5 2.8H3M2.5 8.6H9M2.5 10.6H11" stroke="#fff" stroke-width="0.9"/></g></svg>
<span style="left:1574.00px;top:424.99px;font-size:13px;line-height:13px;color:#000;font-family:'Liberation Sans',sans-serif;font-weight:bold;">1</span>
<span style="left:1655.50px;top:427.15px;font-size:14px;line-height:14px;color:#000;font-family:'Liberation Sans',sans-serif;letter-spacing:-0.054px;">Trace</span>
<span style="left:1783.50px;top:427.15px;font-size:14px;line-height:14px;color:#000;font-family:'Liberation Sans',sans-serif;letter-spacing:0.331px;">Comment</span>
<span style="left:1898.00px;top:427.15px;font-size:14px;line-height:14px;color:#000;font-family:'Liberation Sans',sans-serif;">...</span>
<div style="left:1293px;top:446px;width:625px;height:20px;background:#eef5fc"></div>
<svg style="left:1296px;top:448px;" width="16" height="16" viewBox="0 0 16 16"><circle cx="8" cy="8" r="6.3" fill="#0b67b0"/></svg>
<span style="left:1320.00px;top:449.15px;font-size:14px;line-height:14px;color:#000;font-family:'Liberation Sans',sans-serif;letter-spacing:0.812px;">[2][1]</span>
<span style="left:1464.00px;top:451.04px;font-size:13px;line-height:13px;color:#000;font-family:'Liberation Mono',monospace;letter-spacing:0.116px;">7ffff7c41820</span>
<span style="left:1607.00px;top:449.15px;font-size:14px;line-height:14px;color:#000;font-family:'Liberation Sans',sans-serif;letter-spacing:0.406px;">termmines</span>
<span style="left:1750.00px;top:449.15px;font-size:14px;line-height:14px;color:#000;font-family:'Liberation Sans',sans-serif;">srand</span>
<div style="left:1897px;top:449px;width:14px;height:14px;background:#f4f4f4;border:1px solid #b8b8b8;border-radius:2px;box-sizing:border-box"></div>
<svg style="left:1296px;top:468px;" width="16" height="16" viewBox="0 0 16 16"><circle cx="8" cy="8" r="6.3" fill="#0b67b0"/></svg>
<span style="left:1320.00px;top:469.15px;font-size:14px;line-height:14px;color:#000;font-family:'Liberation Sans',sans-serif;letter-spacing:0.812px;">[3][1]</span>
<span style="left:1464.00px;top:471.04px;font-size:13px;line-height:13px;color:#000;font-family:'Liberation Mono',monospace;letter-spacing:0.116px;">7ffff7c41e90</span>
<span style="left:1607.00px;top:469.15px;font-size:14px;line-height:14px;color:#000;font-family:'Liberation Sans',sans-serif;letter-spacing:0.406px;">termmines</span>
<span style="left:1750.00px;top:469.15px;font-size:14px;line-height:14px;color:#000;font-family:'Liberation Sans',sans-serif;">rand</span>
<div style="left:1897px;top:469px;width:14px;height:14px;background:#f4f4f4;border:1px solid #b8b8b8;border-radius:2px;box-sizing:border-box"></div>
<span style="left:1297.00px;top:711.15px;font-size:14px;line-height:14px;color:#000;font-family:'Liberation Sans',sans-serif;">Filter:</span>
<div style="left:1343px;top:707px;width:509px;height:23px;background:#fff;border:1px solid #c6c6c6;box-sizing:border-box"></div>
<svg style="left:1856px;top:709px;" width="18" height="18" viewBox="0 0 18 18"><path d="M4.5 1.5H11.5L15.5 5.5V16.5H4.5Z" fill="#cfe3fa" stroke="#3d8ee6" stroke-width="1"/><path d="M5 13H15" stroke="#5aa0ee" stroke-width="1.6"/><path d="M6 6L2.5 9L6 12M10 6L13.5 9L10 12" fill="none" stroke="#3d8ee6" stroke-width="1.6"/></svg>
<svg style="left:1881px;top:709px;" width="18" height="18" viewBox="0 0 18 18"><g stroke="#8a8a8a" stroke-width="2"><path d="M2 4H16M2 9H16M2 14H16"/></g><g fill="#8a8a8a"><circle cx="6" cy="4" r="2.3"/><circle cx="12" cy="9" r="2.3"/><circle cx="7" cy="14" r="2.3"/></g></svg>
<svg style="left:1904px;top:714px;" width="10" height="6" viewBox="0 0 10 6"><path d="M1 1L9 1L5 5Z" fill="#000"/></svg>
<div style="left:1292px;top:732px;width:626px;height:36px;background:#f2f2f2"></div>
<div style="left:1755px;top:733px;width:140px;height:3px;background:#3479c8"></div>
<svg style="left:1291px;top:746px;" width="10" height="14" viewBox="0 0 10 14"><path d="M7 2L2 7L7 12" fill="none" stroke="#000" stroke-width="1.3"/></svg>
<span style="left:1305.00px;top:743.15px;font-size:14px;line-height:14px;color:#000;font-family:'Liberation Sans',sans-serif;letter-spacing:-0.104px;">ɘd Strings</span>
<svg style="left:1374px;top:745px;" width="10" height="10" viewBox="0 0 10 10"><path d="M2.2 2.2L7.8 7.8M7.8 2.2L2.2 7.8" stroke="#000" stroke-width="1.5"/></svg>
<svg style="left:1411px;top:742px;" width="16" height="16" viewBox="0 0 16 16"><rect x="1" y="1" width="5" height="5" fill="none" stroke="#666" stroke-width="1.8"/><rect x="10" y="1" width="5" height="5" fill="#666"/><rect x="1" y="10" width="5" height="5" fill="none" stroke="#666" stroke-width="1.8"/><circle cx="12.5" cy="12.5" r="2.8" fill="#666"/><path d="M6 3.5H10M12.5 6V10" stroke="#666" stroke-width="1.5"/></svg>
<span style="left:1432.00px;top:743.15px;font-size:14px;line-height:14px;color:#000;font-family:'Liberation Sans',sans-serif;letter-spacing:-0.131px;">Modules</span>
<svg style="left:1491px;top:745px;" width="10" height="10" viewBox="0 0 10 10"><path d="M2.2 2.2L7.8 7.8M7.8 2.2L2.2 7.8" stroke="#000" stroke-width="1.5"/></svg>
<svg style="left:1528px;top:743px;" width="16" height="14" viewBox="0 0 16 14"><rect x="1" y="1" width="13" height="4" fill="none" stroke="#555"/><rect x="5" y="5" width="9" height="4" fill="none" stroke="#555"/><rect x="5" y="9" width="9" height="4" fill="none" stroke="#555"/><path d="M3 5V11H5" stroke="#555" fill="none"/></svg>
<span style="left:1548.00px;top:743.15px;font-size:14px;line-height:14px;color:#000;font-family:'Liberation Sans',sans-serif;letter-spacing:-0.015px;">Registers</span>
<svg style="left:1614px;top:745px;" width="10" height="10" viewBox="0 0 10 10"><path d="M2.2 2.2L7.8 7.8M7.8 2.2L2.2 7.8" stroke="#000" stroke-width="1.5"/></svg>
<svg style="left:1651px;top:742px;" width="16" height="16" viewBox="0 0 16 16"><path d="M1 1H11L15 5V15H1Z" fill="#fff" stroke="#222" stroke-width="1.4"/><text x="7.5" y="8" font-size="6.5" font-weight="bold" font-family="Liberation Mono" text-anchor="middle">10</text><text x="7.5" y="14" font-size="6.5" font-weight="bold" font-family="Liberation Mono" text-anchor="middle">01</text></svg>
<span style="left:1672.00px;top:743.15px;font-size:14px;line-height:14px;color:#000;font-family:'Liberation Sans',sans-serif;letter-spacing:0.240px;">Memory</span>
<svg style="left:1730px;top:745px;" width="10" height="10" viewBox="0 0 10 10"><path d="M2.2 2.2L7.8 7.8M7.8 2.2L2.2 7.8" stroke="#000" stroke-width="1.5"/></svg>
<svg style="left:1766px;top:742px;" width="17" height="17" viewBox="0 0 17 17"><circle cx="8.5" cy="8.5" r="7.2" fill="#0b5fa8"/><path d="M4.9 4.9A5.1 5.1 0 0 1 12.1 12.1Z" fill="#fff"/></svg>
<span style="left:1787.00px;top:743.15px;font-size:14px;line-height:14px;color:#000;font-family:'Liberation Sans',sans-serif;letter-spacing:0.188px;">Breakpoints</span>
<svg style="left:1870px;top:745px;" width="10" height="10" viewBox="0 0 10 10"><path d="M2.2 2.2L7.8 7.8M7.8 2.2L2.2 7.8" stroke="#000" stroke-width="1.5"/></svg>
<svg style="left:1900px;top:744px;" width="14" height="10" viewBox="0 0 14 10"><path d="M2 8L7 3L12 8" fill="none" stroke="#000" stroke-width="1.3"/></svg>
<div style="left:669px;top:771px;width:1250px;height:246px;background:#f2f2f2;border:1px solid #8a8a8a;box-sizing:border-box"></div>
<div style="left:670px;top:772px;width:1248px;height:23px;background:linear-gradient(to right,#a6a6a6 0%,#bdbdbd 40%,#efefef 85%);border:1px solid #828282;box-sizing:border-box"></div>
<span style="left:676.00px;top:776.15px;font-size:14px;line-height:14px;color:#000;font-family:'Liberation Sans',sans-serif;letter-spacing:0.311px;">Terminal - local-gdb.sh /tmp/termmines</span>
<svg style="left:1830px;top:775px;" width="16" height="16" viewBox="0 0 16 16"><path d="M1 2H7L9 4V11H1Z" fill="#c8c8c8"/><path d="M6 6H12L14 8V15H6Z" fill="#c8c8c8" stroke="#f0f0f0" stroke-width="0.8"/></svg>
<svg style="left:1853px;top:775px;" width="16" height="16" viewBox="0 0 16 16"><rect x="1" y="2" width="9" height="12" rx="2" fill="#a8a8a8"/><rect x="5" y="4" width="10" height="12" rx="1" fill="#a8a8a8" stroke="#f0f0f0" stroke-width="0.8"/></svg>
<div style="left:1873px;top:775px;width:1px;height:18px;background:#c4c4c4"></div>
<svg style="left:1878px;top:778px;" width="14" height="10" viewBox="0 0 14 10"><path d="M1 2L13 2L7 9Z" fill="#000"/></svg>
<svg style="left:1898px;top:775px;" width="16" height="16" viewBox="0 0 16 16"><path d="M3.0 3.0L13.0 13.0M13.0 3.0L3.0 13.0" stroke="#000" stroke-width="2.6" stroke-linecap="butt"/></svg>
<div style="left:670px;top:795px;width:1248px;height:2px;background:#1a1a1a"></div>
<div style="left:670px;top:797px;width:1236px;height:219px;background:#000"></div>
<div style="left:671px;top:797px;width:1px;height:218px;background:#e8e8e8"></div>
<div style="left:671px;top:797px;width:1235px;height:1px;background:#e8e8e8"></div>
<div style="left:671px;top:1014px;width:1235px;height:1px;background:#ddd"></div>
<div style="left:1906px;top:797px;width:12px;height:219px;background:#f0f0f0"></div>
<div style="left:1909px;top:957px;width:5px;height:55px;background:#d8d8d8;border-radius:3px"></div>
<div style="left:670px;top:797px;width:1236px;height:8px;overflow:hidden">
<span style="left:2.00px;top:-5.35px;font-size:12.2px;line-height:12.2px;color:#d6d6d6;font-family:'Liberation Mono',monospace;font-weight:bold;transform:scaleX(0.9534);transform-origin:0 0;">The target architecture is set to &quot;i386:x86-64&quot;.</span>
</div>
<span style="left:672.00px;top:807.65px;font-size:12.2px;line-height:12.2px;color:#d6d6d6;font-family:'Liberation Mono',monospace;font-weight:bold;transform:scaleX(0.9534);transform-origin:0 0;">The target endianness is set automatically (currently little endian).</span>
<span style="left:672.00px;top:823.65px;font-size:12.2px;line-height:12.2px;color:#d6d6d6;font-family:'Liberation Mono',monospace;font-weight:bold;transform:scaleX(0.9534);transform-origin:0 0;">Reading symbols from </span>
<span style="left:818.58px;top:823.65px;font-size:12.2px;line-height:12.2px;color:#48d048;font-family:'Liberation Mono',monospace;font-weight:bold;transform:scaleX(0.9534);transform-origin:0 0;">/tmp/termmines</span>
<span style="left:916.30px;top:823.65px;font-size:12.2px;line-height:12.2px;color:#d6d6d6;font-family:'Liberation Mono',monospace;font-weight:bold;transform:scaleX(0.9534);transform-origin:0 0;">...</span>
<span style="left:672.00px;top:839.65px;font-size:12.2px;line-height:12.2px;color:#d6d6d6;font-family:'Liberation Mono',monospace;font-weight:bold;transform:scaleX(0.9534);transform-origin:0 0;">(No debugging symbols found in </span>
<span style="left:888.38px;top:839.65px;font-size:12.2px;line-height:12.2px;color:#48d048;font-family:'Liberation Mono',monospace;font-weight:bold;transform:scaleX(0.9534);transform-origin:0 0;">/tmp/termmines</span>
<span style="left:986.10px;top:839.65px;font-size:12.2px;line-height:12.2px;color:#d6d6d6;font-family:'Liberation Mono',monospace;font-weight:bold;transform:scaleX(0.9534);transform-origin:0 0;">)</span>
<span style="left:672.00px;top:855.65px;font-size:12.2px;line-height:12.2px;color:#d6d6d6;font-family:'Liberation Mono',monospace;font-weight:bold;transform:scaleX(0.9534);transform-origin:0 0;">Connected to Ghidra 11.4 at 127.0.0.1:36389</span>
<span style="left:672.00px;top:871.65px;font-size:12.2px;line-height:12.2px;color:#d6d6d6;font-family:'Liberation Mono',monospace;font-weight:bold;transform:scaleX(0.9534);transform-origin:0 0;">Temporary breakpoint 1 at </span>
<span style="left:853.48px;top:871.65px;font-size:12.2px;line-height:12.2px;color:#5528f0;font-family:'Liberation Mono',monospace;font-weight:bold;transform:scaleX(0.9534);transform-origin:0 0;">0x400ad0</span>
<span style="left:672.00px;top:887.65px;font-size:12.2px;line-height:12.2px;color:#d6d6d6;font-family:'Liberation Mono',monospace;font-weight:bold;transform:scaleX(0.9534);transform-origin:0 0;">Starting program: </span>
<span style="left:797.64px;top:887.65px;font-size:12.2px;line-height:12.2px;color:#48d048;font-family:'Liberation Mono',monospace;font-weight:bold;transform:scaleX(0.9534);transform-origin:0 0;">/tmp/termmines</span>
<span style="left:672.00px;top:903.65px;font-size:12.2px;line-height:12.2px;color:#d6d6d6;font-family:'Liberation Mono',monospace;font-weight:bold;transform:scaleX(0.9534);transform-origin:0 0;">[Thread debugging using libthread_db enabled]</span>
<span style="left:672.00px;top:919.65px;font-size:12.2px;line-height:12.2px;color:#d6d6d6;font-family:'Liberation Mono',monospace;font-weight:bold;transform:scaleX(0.9534);transform-origin:0 0;">Using host libthread_db library &quot;</span>
<span style="left:902.34px;top:919.65px;font-size:12.2px;line-height:12.2px;color:#48d048;font-family:'Liberation Mono',monospace;font-weight:bold;transform:scaleX(0.9534);transform-origin:0 0;">/lib64/libthread_db.so.1</span>
<span style="left:1069.86px;top:919.65px;font-size:12.2px;line-height:12.2px;color:#d6d6d6;font-family:'Liberation Mono',monospace;font-weight:bold;transform:scaleX(0.9534);transform-origin:0 0;">&quot;.</span>
<span style="left:672.00px;top:951.65px;font-size:12.2px;line-height:12.2px;color:#d6d6d6;font-family:'Liberation Mono',monospace;font-weight:bold;transform:scaleX(0.9534);transform-origin:0 0;">Temporary breakpoint 1, </span>
<span style="left:839.52px;top:951.65px;font-size:12.2px;line-height:12.2px;color:#5528f0;font-family:'Liberation Mono',monospace;font-weight:bold;transform:scaleX(0.9534);transform-origin:0 0;">0x0000000000400ad0</span>
<span style="left:965.16px;top:951.65px;font-size:12.2px;line-height:12.2px;color:#d6d6d6;font-family:'Liberation Mono',monospace;font-weight:bold;transform:scaleX(0.9534);transform-origin:0 0;"> in </span>
<span style="left:993.08px;top:951.65px;font-size:12.2px;line-height:12.2px;color:#d8d820;font-family:'Liberation Mono',monospace;font-weight:bold;transform:scaleX(0.9534);transform-origin:0 0;">main</span>
<span style="left:1021.00px;top:951.65px;font-size:12.2px;line-height:12.2px;color:#d6d6d6;font-family:'Liberation Mono',monospace;font-weight:bold;transform:scaleX(0.9534);transform-origin:0 0;"> ()</span>
<span style="left:672.00px;top:967.65px;font-size:12.2px;line-height:12.2px;color:#d6d6d6;font-family:'Liberation Mono',monospace;font-weight:bold;transform:scaleX(0.9534);transform-origin:0 0;">--Type &lt;RET&gt; for more, q to quit, c to continue without paging--</span>
<span style="left:672.00px;top:999.65px;font-size:12.2px;line-height:12.2px;color:#d6d6d6;font-family:'Liberation Mono',monospace;font-weight:bold;transform:scaleX(0.9534);transform-origin:0 0;">--Type &lt;RET&gt; for more, q to quit, c to continue without paging--</span>
<div style="left:1120px;top:996px;width:7px;height:18px;border:1px solid #f0a0b0;box-sizing:border-box"></div>
<div style="left:1045px;top:1016px;width:103px;height:3px;background:#8db3dc"></div>
<svg style="left:681px;top:1024px;" width="16" height="16" viewBox="0 0 16 16"><circle cx="8" cy="8" r="7" fill="#dde8f8" stroke="#c89a40" stroke-width="1.4"/><path d="M8 4V8L5.5 9.5" stroke="#555" fill="none" stroke-width="1"/></svg>
<span style="left:702.00px;top:1025.15px;font-size:14px;line-height:14px;color:#000;font-family:'Liberation Sans',sans-serif;letter-spacing:0.102px;">Time</span>
<svg style="left:739px;top:1027px;" width="10" height="10" viewBox="0 0 10 10"><path d="M2.2 2.2L7.8 7.8M7.8 2.2L2.2 7.8" stroke="#000" stroke-width="1.5"/></svg>
<svg style="left:777px;top:1024px;" width="14" height="16" viewBox="0 0 14 16"><path d="M1 1H9L13 5V15H1Z" fill="#fff" stroke="#c89a40" stroke-width="1"/><path d="M3 6H11M3 8.5H11M3 11H11" stroke="#8aa0c0" stroke-width="0.8"/></svg>
<span style="left:797.00px;top:1025.15px;font-size:14px;line-height:14px;color:#000;font-family:'Liberation Sans',sans-serif;letter-spacing:0.159px;">Static Mappings</span>
<svg style="left:905px;top:1027px;" width="10" height="10" viewBox="0 0 10 10"><path d="M2.2 2.2L7.8 7.8M7.8 2.2L2.2 7.8" stroke="#000" stroke-width="1.5"/></svg>
<svg style="left:941px;top:1024px;" width="17" height="17" viewBox="0 0 17 17"><ellipse cx="7.5" cy="9.5" rx="4" ry="5.5" fill="#3a64b8" transform="rotate(35 7.5 9.5)"/><path d="M2 5L5 7M1 10H4M2 15L5 12M9 3L11 6M14 8L11 9M13 13L10 12" stroke="#3a64b8" stroke-width="1.5"/><path d="M12 1L16 1L14 4Z" fill="#2a9a2a"/></svg>
<span style="left:963.00px;top:1025.15px;font-size:14px;line-height:14px;color:#000;font-family:'Liberation Sans',sans-serif;letter-spacing:0.234px;">Threads</span>
<svg style="left:1020px;top:1027px;" width="10" height="10" viewBox="0 0 10 10"><path d="M2.2 2.2L7.8 7.8M7.8 2.2L2.2 7.8" stroke="#000" stroke-width="1.5"/></svg>
<span style="left:1062.00px;top:1025.15px;font-size:14px;line-height:14px;color:#000;font-family:'Liberation Sans',sans-serif;letter-spacing:0.137px;">Terminal</span>
<svg style="left:1123px;top:1027px;" width="10" height="10" viewBox="0 0 10 10"><path d="M2.2 2.2L7.8 7.8M7.8 2.2L2.2 7.8" stroke="#000" stroke-width="1.5"/></svg>
<svg style="left:9px;top:53px;" width="16" height="16" viewBox="0 0 16 16"><rect x="1" y="1" width="14" height="14" rx="1.5" fill="#5a8ad8" stroke="#2a5ab0" stroke-width="1"/><rect x="4" y="1.5" width="8" height="5" fill="#e8f0ff"/><rect x="9" y="2" width="1.5" height="3" fill="#2a5ab0"/><rect x="3" y="9" width="10" height="5" fill="#fff"/><path d="M4 11H12M4 13H12" stroke="#6ab04a" stroke-width="1.1"/></svg>
<div style="left:34px;top:54px;width:1px;height:15px;background:#c8c8c8"></div>
<svg style="left:43px;top:53px;" width="16" height="16" viewBox="0 0 16 16"><path d="M1 8L7 2V5.5H15V10.5H7V14Z" fill="#4ab0f0" stroke="#000" stroke-width="1.1"/></svg>
<svg style="left:63px;top:57px;" width="10" height="6" viewBox="0 0 10 6"><path d="M1 1L9 1L5 5Z" fill="#000"/></svg>
<svg style="left:79px;top:53px;" width="16" height="16" viewBox="0 0 16 16"><path d="M15 8L9 2V5.5H1V10.5H9V14Z" fill="#9a9a9a"/></svg>
<svg style="left:99px;top:57px;" width="10" height="6" viewBox="0 0 10 6"><path d="M1 1L9 1L5 5Z" fill="#9a9a9a"/></svg>
<div style="left:118px;top:54px;width:1px;height:15px;background:#c8c8c8"></div>
<svg style="left:127px;top:53px;" width="16" height="16" viewBox="0 0 16 16"><path d="M1 2H9L11 4V15H1Z" fill="#a8a8a8"/><path d="M8 4V9H5L11 15L17 9H14V4Z" fill="#8a8a8a" transform="translate(-1,0)"/></svg>
<svg style="left:149px;top:53px;" width="16" height="16" viewBox="0 0 16 16"><path d="M1 2H9L11 4V15H1Z" fill="#a8a8a8"/><path d="M8 15V10H5L11 4L17 10H14V15Z" fill="#8a8a8a" transform="translate(-1,0)"/></svg>
<svg style="left:171px;top:53px;" width="16" height="16" viewBox="0 0 16 16"><path d="M1 2H9L11 4V15H1Z" fill="#a8a8a8"/><path d="M8 4V9H5L11 15L17 9H14V4Z" fill="#8a8a8a" transform="translate(-1,0)"/></svg>
<svg style="left:193px;top:53px;" width="16" height="16" viewBox="0 0 16 16"><path d="M1 2H9L11 4V15H1Z" fill="#a8a8a8"/><path d="M8 15V10H5L11 4L17 10H14V15Z" fill="#8a8a8a" transform="translate(-1,0)"/></svg>
<svg style="left:215px;top:53px;" width="16" height="16" viewBox="0 0 16 16"><rect x="1.5" y="1.5" width="11" height="14" fill="#4ad04a" stroke="#000" stroke-width="1.4"/><rect x="3" y="4" width="8" height="3" fill="#fff"/><circle cx="12" cy="11" r="4.3" fill="#fff" stroke="#777" stroke-width="1"/><rect x="10.3" y="9.3" width="3.4" height="3.4" fill="#111"/></svg>
<div style="left:241px;top:54px;width:1px;height:15px;background:#c8c8c8"></div>
<svg style="left:249px;top:53px;" width="16" height="16" viewBox="0 0 16 16"><path d="M5.5 1H10.5V9H14L8 15L2 9H5.5Z" fill="#4ab0f0" stroke="#000" stroke-width="1"/></svg>
<svg style="left:271px;top:53px;" width="16" height="16" viewBox="0 0 16 16"><circle cx="8" cy="8" r="7" fill="#e8a0a0"/><path d="M4.5 11.5L11.5 4.5" stroke="#fff" stroke-width="2.2"/></svg>
<svg style="left:293px;top:53px;" width="16" height="16" viewBox="0 0 16 16"><text x="8" y="14" font-size="15" font-weight="bold" font-family="Liberation Mono" text-anchor="middle" fill="#3ab4f4" stroke="#000" stroke-width="1.6" paint-order="stroke" stroke-linejoin="round">I</text></svg>
<svg style="left:315px;top:53px;" width="16" height="16" viewBox="0 0 16 16"><text x="8" y="14" font-size="15" font-weight="bold" font-family="Liberation Sans" text-anchor="middle" fill="#3ab4f4" stroke="#000" stroke-width="1.6" paint-order="stroke" stroke-linejoin="round">D</text></svg>
<svg style="left:337px;top:53px;" width="16" height="16" viewBox="0 0 16 16"><text x="8" y="14" font-size="15" font-weight="bold" font-family="Liberation Sans" text-anchor="middle" fill="#3ab4f4" stroke="#000" stroke-width="1.6" paint-order="stroke" stroke-linejoin="round">U</text></svg>
<svg style="left:359px;top:53px;" width="16" height="16" viewBox="0 0 16 16"><text x="8" y="14" font-size="15" font-weight="bold" font-family="Liberation Sans" text-anchor="middle" fill="#3ab4f4" stroke="#000" stroke-width="1.6" paint-order="stroke" stroke-linejoin="round">L</text></svg>
<svg style="left:381px;top:53px;" width="16" height="16" viewBox="0 0 16 16"><text x="8" y="14" font-size="15" font-weight="bold" font-family="Liberation Sans" text-anchor="middle" fill="#3ab4f4" stroke="#000" stroke-width="1.6" paint-order="stroke" stroke-linejoin="round">F</text></svg>
<svg style="left:403px;top:53px;" width="16" height="16" viewBox="0 0 16 16"><text x="8" y="14" font-size="15" font-weight="bold" font-family="Liberation Sans" text-anchor="middle" fill="#3ab4f4" stroke="#000" stroke-width="1.6" paint-order="stroke" stroke-linejoin="round">V</text></svg>
<svg style="left:425px;top:53px;" width="16" height="16" viewBox="0 0 16 16"><text x="8" y="14" font-size="15" font-weight="bold" font-family="Liberation Sans" text-anchor="middle" fill="#5a9ae0" stroke="#000" stroke-width="1.6" paint-order="stroke" stroke-linejoin="round">B</text></svg>
<svg style="left:446px;top:57px;" width="10" height="6" viewBox="0 0 10 6"><path d="M1 1L9 1L5 5Z" fill="#000"/></svg>
<div style="left:465px;top:54px;width:1px;height:15px;background:#c8c8c8"></div>
<svg style="left:472px;top:53px;" width="17" height="17" viewBox="0 0 17 17"><ellipse cx="7.5" cy="9.5" rx="4" ry="5.5" fill="#3a64b8" transform="rotate(35 7.5 9.5)"/><path d="M2 5L5 7M1 10H4M2 15L5 12M9 3L11 6M14 8L11 9M13 13L10 12" stroke="#3a64b8" stroke-width="1.5"/><path d="M12 1L16 1L14 4Z" fill="#2a9a2a"/></svg>
<svg style="left:493px;top:57px;" width="10" height="6" viewBox="0 0 10 6"><path d="M1 1L9 1L5 5Z" fill="#000"/></svg>
<svg style="left:509px;top:53px;" width="16" height="16" viewBox="0 0 16 16"><rect x="1" y="2" width="7" height="6" rx="2" fill="#8a8a8a"/><rect x="7" y="8" width="8" height="7" rx="2" fill="#8a8a8a"/><circle cx="4.5" cy="11.5" r="3.3" fill="#8a8a8a"/><circle cx="11" cy="4.5" r="2.8" fill="#8a8a8a"/></svg>
<div style="left:535px;top:54px;width:1px;height:15px;background:#c8c8c8"></div>
<svg style="left:543px;top:53px;" width="16" height="16" viewBox="0 0 16 16"><circle cx="8" cy="8" r="7" fill="#fff" stroke="#333" stroke-width="0.8"/><circle cx="8" cy="8" r="4.6" fill="#f02828"/></svg>
<svg style="left:564px;top:57px;" width="10" height="6" viewBox="0 0 10 6"><path d="M1 1L9 1L5 5Z" fill="#000"/></svg>
<svg style="left:579px;top:53px;" width="16" height="16" viewBox="0 0 16 16"><path d="M3 2L14 8L3 14Z" fill="#1a8a1a"/></svg>
<svg style="left:600px;top:53px;" width="16" height="16" viewBox="0 0 16 16"><rect x="2" y="2" width="4.5" height="12" fill="#9a9a9a"/><rect x="9.5" y="2" width="4.5" height="12" fill="#9a9a9a"/></svg>
<svg style="left:623px;top:53px;" width="16" height="16" viewBox="0 0 16 16"><rect x="2" y="2" width="11" height="11" fill="#b00000"/></svg>
<svg style="left:645px;top:53px;" width="16" height="16" viewBox="0 0 16 16"><path d="M2 14L7 10M4 16L7 13" stroke="#d8b020" stroke-width="2"/><path d="M6 11L11 6" stroke="#b00000" stroke-width="1.6"/><circle cx="11.5" cy="5" r="3.3" fill="#b00000"/></svg>
<svg style="left:666px;top:53px;" width="16" height="16" viewBox="0 0 16 16"><rect x="1" y="12" width="3" height="3" fill="#1a5ad8"/><rect x="12" y="12" width="3" height="3" fill="#1a5ad8"/><path d="M1 3H8V9" stroke="#8a6a00" stroke-width="3.6" fill="none"/><path d="M1 3H8V9" stroke="#f0c020" stroke-width="2" fill="none"/><path d="M4 8H12L8 12Z" fill="#f0c020" stroke="#8a6a00" stroke-width="0.8"/></svg>
<svg style="left:689px;top:53px;" width="16" height="16" viewBox="0 0 16 16"><rect x="1" y="12" width="3" height="3" fill="#1a5ad8"/><rect x="12" y="12" width="3" height="3" fill="#1a5ad8"/><path d="M3 10V3H12V8" stroke="#8a6a00" stroke-width="3.6" fill="none"/><path d="M3 10V3H12V8" stroke="#f0c020" stroke-width="2" fill="none"/><path d="M8 7H16L12 11Z" fill="#f0c020" stroke="#8a6a00" stroke-width="0.8"/></svg>
<svg style="left:712px;top:53px;" width="16" height="16" viewBox="0 0 16 16"><rect x="1" y="12" width="3" height="3" fill="#1a5ad8"/><rect x="12" y="12" width="3" height="3" fill="#1a5ad8"/><path d="M6 13V6H11" stroke="#8a6a00" stroke-width="3.6" fill="none"/><path d="M6 13V6H11" stroke="#f0c020" stroke-width="2" fill="none"/><path d="M10 2L15 6L10 10Z" fill="#f0c020" stroke="#8a6a00" stroke-width="0.8"/></svg>
<svg style="left:734px;top:53px;" width="16" height="16" viewBox="0 0 16 16"><path d="M4 11H2V2H13V11H9" stroke="#8a6a00" stroke-width="3.6" fill="none"/><path d="M4 11H2V2H13V11H9" stroke="#f0c020" stroke-width="2" fill="none"/><path d="M10 8L5 12L10 16Z" fill="#f0c020" stroke="#8a6a00" stroke-width="0.8"/></svg>
<svg style="left:756px;top:53px;" width="16" height="16" viewBox="0 0 16 16"><path d="M4 11H2V2H13V11H9" stroke="#8a6a00" stroke-width="3.6" fill="none"/><path d="M4 11H2V2H13V11H9" stroke="#f0c020" stroke-width="2" fill="none"/><path d="M10 8L5 12L10 16Z" fill="#f0c020" stroke="#8a6a00" stroke-width="0.8"/></svg>
<div style="left:781px;top:54px;width:1px;height:15px;background:#c8c8c8"></div>
<svg style="left:789px;top:53px;" width="16" height="16" viewBox="0 0 16 16"><path d="M6 3H12L15 6V15H6Z" fill="#a8a8a8"/><path d="M2 4L4 6L8 1" stroke="#8a8a8a" stroke-width="1.6" fill="none"/><path d="M1 10L6 6V8H12V12H6V14Z" fill="#8a8a8a"/></svg>
<svg style="left:811px;top:53px;" width="16" height="16" viewBox="0 0 16 16"><path d="M6 3H12L15 6V15H6Z" fill="#a8a8a8"/><path d="M2 4L4 6L8 1" stroke="#8a8a8a" stroke-width="1.6" fill="none"/><path d="M14 10L9 6V8H2V12H9V14Z" fill="#8a8a8a"/></svg>
<div style="left:836px;top:54px;width:1px;height:15px;background:#c8c8c8"></div>
<svg style="left:844px;top:53px;" width="18" height="16" viewBox="0 0 18 16"><path d="M3 9A6 6 0 1 1 9 15" fill="none" stroke="#2aa82a" stroke-width="3"/><path d="M0 5L6 5L3 11Z" fill="#2aa82a" transform="rotate(-20 3 8)"/></svg>
<svg style="left:866px;top:57px;" width="10" height="6" viewBox="0 0 10 6"><path d="M1 1L9 1L5 5Z" fill="#000"/></svg>
<svg style="left:880px;top:53px;" width="18" height="16" viewBox="0 0 18 16"><path d="M15 9A6 6 0 1 0 9 15" fill="none" stroke="#9a9a9a" stroke-width="3"/><path d="M18 5L12 5L15 11Z" fill="#9a9a9a" transform="rotate(20 15 8)"/></svg>
<svg style="left:901px;top:57px;" width="10" height="6" viewBox="0 0 10 6"><path d="M1 1L9 1L5 5Z" fill="#9a9a9a"/></svg>
<div style="left:921px;top:54px;width:1px;height:15px;background:#c8c8c8"></div>
<svg style="left:929px;top:53px;" width="16" height="16" viewBox="0 0 16 16"><path d="M2 9L6 14L15 2" stroke="#8a10e0" stroke-width="2.6" fill="none"/></svg>
<svg style="left:951px;top:53px;" width="16" height="16" viewBox="0 0 16 16"><rect x="1" y="1" width="14" height="14" fill="#fff" stroke="#000" stroke-width="1.5"/><text x="8" y="7.5" font-size="7" font-weight="bold" font-family="Liberation Mono" text-anchor="middle">10</text><text x="8" y="14" font-size="7" font-weight="bold" font-family="Liberation Mono" text-anchor="middle">01</text></svg>
<svg style="left:973px;top:53px;" width="16" height="16" viewBox="0 0 16 16"><path d="M2 6L6 2L12 8L14 6V14H6L8 12Z" fill="#4ac04a" stroke="#1a6a1a" stroke-width="1"/></svg>
<svg style="left:996px;top:55px;" width="14" height="13" viewBox="0 0 14 13"><rect x="0.5" y="0.5" width="13" height="12" fill="#f4f4f4" stroke="#333" stroke-width="1"/><path d="M2 1V12" stroke="#222" stroke-dasharray="1 1" stroke-width="2"/><rect x="4" y="2" width="8" height="2" fill="#5a78a8"/><rect x="4" y="5" width="8" height="2" fill="#5a78a8"/><rect x="4" y="8" width="8" height="3" fill="#c8e8d0"/></svg>
<svg style="left:1017px;top:53px;" width="16" height="16" viewBox="0 0 16 16"><path d="M1 3H6L7 5H15V14H1Z" fill="#e0c060" stroke="#8a7020" stroke-width="1"/><text x="8" y="13" font-size="7" font-weight="bold" font-family="Liberation Sans" text-anchor="middle">DT</text></svg>
<svg style="left:1040px;top:55px;" width="14" height="13" viewBox="0 0 14 13"><rect x="0.5" y="0.5" width="13" height="12" fill="#f4f4f4" stroke="#333" stroke-width="1"/><path d="M2 1V12" stroke="#222" stroke-dasharray="1 1" stroke-width="2"/><rect x="4" y="2" width="8" height="2" fill="#5a78a8"/><rect x="4" y="5" width="8" height="2" fill="#5a78a8"/><rect x="4" y="8" width="8" height="3" fill="#c8e8d0"/></svg>
<svg style="left:1062px;top:53px;" width="16" height="16" viewBox="0 0 16 16"><text x="6" y="12" font-size="14" font-weight="bold" font-family="Liberation Sans" text-anchor="middle" fill="#2a80f0">C</text><text x="12" y="15" font-size="10" font-style="italic" font-weight="bold" font-family="Liberation Serif" text-anchor="middle" fill="#e020c0">f</text></svg>
<svg style="left:1083px;top:53px;" width="16" height="16" viewBox="0 0 16 16"><rect x="6.5" y="1" width="3" height="3" fill="#8ab8f0"/><path d="M8 4V7M3 7H13M3 7V10M8 7V10M13 7V10" stroke="#888" stroke-width="1"/><rect x="1" y="10" width="4" height="4" fill="#5ab84a"/><rect x="6" y="10" width="4" height="4" fill="#5ab84a"/><rect x="11" y="10" width="4" height="4" fill="#5ab84a"/></svg>
<svg style="left:1105px;top:53px;" width="16" height="16" viewBox="0 0 16 16"><circle cx="8" cy="8" r="7.5" fill="#1a9a3a"/><path d="M6 4.5L11.5 8L6 11.5Z" fill="#fff"/></svg>
<svg style="left:1127px;top:53px;" width="16" height="16" viewBox="0 0 16 16"><rect x="0.8" y="1" width="14.4" height="13.5" rx="1.5" fill="#111"/><rect x="2.2" y="2.4" width="11.6" height="8.6" fill="#3ad03a"/><rect x="4" y="3.2" width="3" height="7" fill="#333"/><rect x="9" y="3.2" width="3" height="7" fill="#333"/><path d="M7.8 4V10" stroke="#fff" stroke-width="0.8" stroke-dasharray="1 1"/><path d="M3 12.8H13" stroke="#fff" stroke-width="1.2" stroke-dasharray="1 1.2"/></svg>
<svg style="left:1149px;top:53px;" width="16" height="16" viewBox="0 0 16 16"><path d="M8 1L15 8L8 15L1 8Z" fill="#f08020" stroke="#2a2aa0" stroke-width="1.3"/></svg>
<svg style="left:1171px;top:53px;" width="16" height="16" viewBox="0 0 16 16"><rect x="1.5" y="1.5" width="13" height="13" fill="#fff" stroke="#6a9ae0"/><path d="M1.5 5H14.5M1.5 8H14.5M1.5 11H14.5M5 5V14.5" stroke="#8ab0e8" stroke-width="0.8"/></svg>
<svg style="left:1193px;top:53px;" width="16" height="16" viewBox="0 0 16 16"><rect x="1.5" y="1.5" width="13" height="13" fill="#fff" stroke="#6a9ae0"/><path d="M1.5 5H14.5M1.5 8H14.5M5 5V14.5" stroke="#8ab0e8" stroke-width="0.8"/><path d="M7 10H11V8L15 11.5L11 15V13H7Z" fill="#4ab04a"/></svg>
<svg style="left:1215px;top:53px;" width="16" height="16" viewBox="0 0 16 16"><rect x="6.5" y="1" width="3" height="4" fill="#fff" stroke="#aaa" stroke-width="0.6"/><path d="M8 5V7M3 7H13M3 7V9M8 7V9M13 7V9" stroke="#aaa" stroke-width="1"/><rect x="1" y="9" width="4" height="5" fill="#dde" stroke="#aab" stroke-width="0.6"/><rect x="6" y="9" width="4" height="5" fill="#edd" stroke="#baa" stroke-width="0.6"/><rect x="11" y="9" width="4" height="5" fill="#ded" stroke="#aba" stroke-width="0.6"/></svg>
<div style="left:1241px;top:54px;width:1px;height:15px;background:#c8c8c8"></div>
<svg style="left:1249px;top:53px;" width="16" height="16" viewBox="0 0 16 16"><circle cx="7" cy="7" r="6" fill="#a8a8a8"/><path d="M5.5 4L9.5 7L5.5 10Z" fill="#d8d8d8"/><path d="M8 14H14V9" stroke="#a8a8a8" stroke-width="1.6" fill="none"/></svg>
</body></html>
